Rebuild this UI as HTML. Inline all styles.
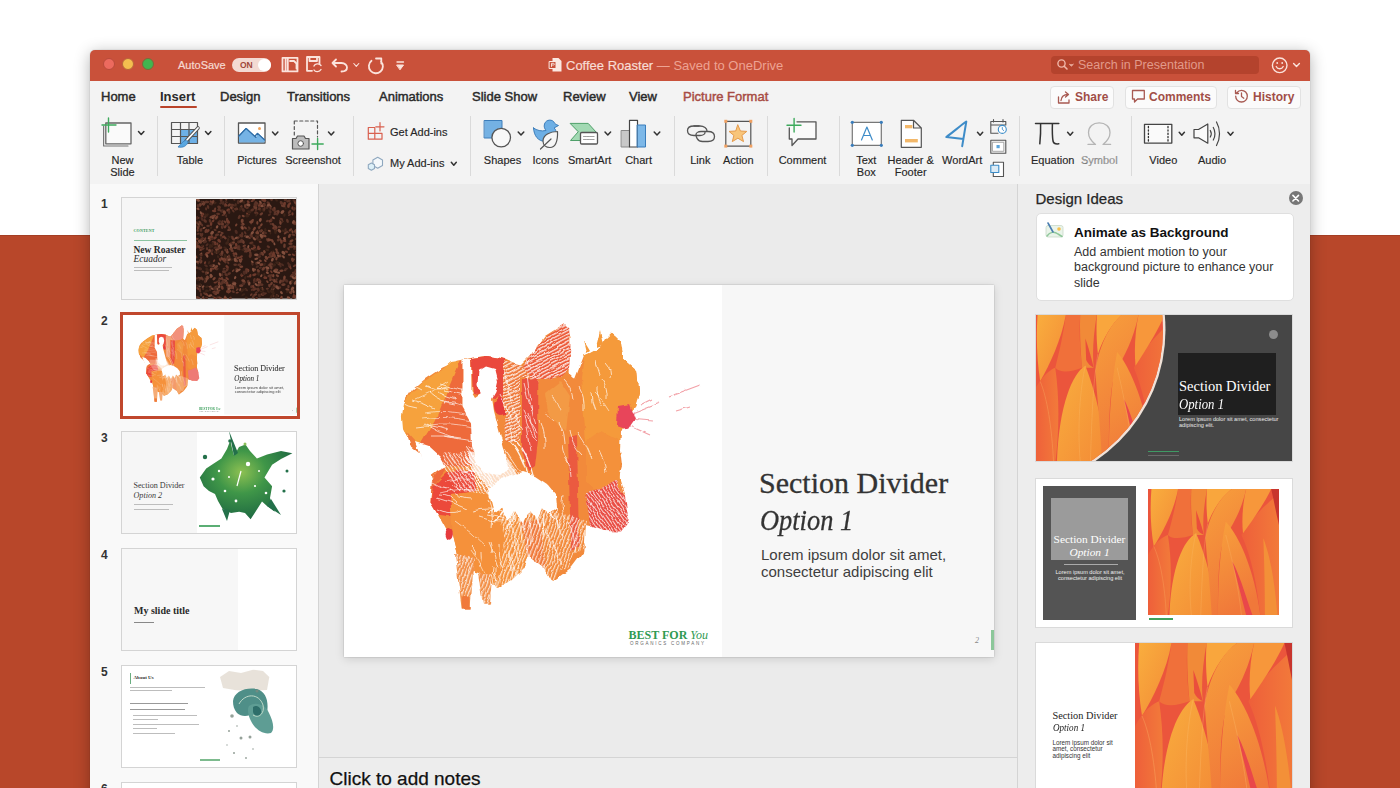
<!DOCTYPE html>
<html><head><meta charset="utf-8">
<style>
*{margin:0;padding:0;box-sizing:border-box}
html,body{width:1400px;height:788px;overflow:hidden;background:#fff;font-family:"Liberation Sans",sans-serif;position:relative}
.a{position:absolute}
.t{position:absolute;white-space:nowrap;line-height:1}
.lbl{position:absolute;font-size:11px;line-height:12px;color:#262626;-webkit-text-stroke:.15px #262626;text-align:center;white-space:nowrap;width:80px}
.tab{position:absolute;top:89.5px;font-size:13px;line-height:1;color:#2a2a2a;white-space:nowrap;-webkit-text-stroke:.45px #2a2a2a}
.sep{position:absolute;top:116px;width:1px;height:60px;background:#DADADA}
.thumb{position:absolute;left:121px;width:176px;height:103px;background:#fff;border:1px solid #D4D4D4;overflow:hidden}
.num{position:absolute;left:101px;font-size:12px;font-weight:bold;color:#333;line-height:1}
.chev{position:absolute;width:6px;height:6px}
svg{position:absolute;overflow:visible}
</style></head>
<body>
<div class="a" style="left:0;top:235.3px;width:1400px;height:553px;background:#B8472A;border-top:1.2px solid #A43E24"></div>
<!-- window -->
<div class="a" style="left:90px;top:50px;width:1220px;height:760px;background:#F3F3F3;border-radius:5px 5px 0 0;box-shadow:0 3px 16px rgba(0,0,0,.30),0 0 1px rgba(0,0,0,.35)"></div>
<!-- title bar -->
<div class="a" style="left:90px;top:50px;width:1220px;height:31px;background:#C9513A;border-radius:5px 5px 0 0"></div>
<div class="a" style="left:102.5px;top:58.3px;width:12px;height:12px;border-radius:50%;background:#EC6A5E;border:1px solid #B84A3A"></div>
<div class="a" style="left:122.1px;top:58.3px;width:12px;height:12px;border-radius:50%;background:#F4BE4F;border:1px solid #B8663A"></div>
<div class="a" style="left:141.7px;top:58.3px;width:12px;height:12px;border-radius:50%;background:#42B54F;border:1px solid #7A6A3A"></div>
<div class="t" style="left:178px;top:59.8px;font-size:11px;color:#F6D9D1;-webkit-text-stroke:.2px #F6D9D1">AutoSave</div>
<div class="a" style="left:232px;top:58.4px;width:39px;height:13.5px;border-radius:7px;background:#F3DAD3"></div>
<div class="t" style="left:240px;top:61.4px;font-size:8.5px;font-weight:bold;color:#A0473A">ON</div>
<div class="a" style="left:258px;top:58.9px;width:12.5px;height:12.5px;border-radius:50%;background:#fff"></div>
<div class="t" style="left:566px;top:59.4px;font-size:13px;color:#F8DDD5;-webkit-text-stroke:.2px #F8DDD5">Coffee Roaster <span style="color:#EDA393;-webkit-text-stroke:0">— Saved to OneDrive</span></div>
<div class="a" style="left:1051px;top:56px;width:208px;height:18px;border-radius:4px;background:#B4432D"></div>
<div class="t" style="left:1078px;top:59px;font-size:12.5px;color:#E29A8A">Search in Presentation</div>

<!-- tabs -->
<div class="tab" style="left:101px">Home</div>
<div class="tab" style="left:160px;font-weight:bold;-webkit-text-stroke:0">Insert</div>
<div class="a" style="left:160px;top:105.5px;width:37px;height:2.5px;border-radius:1.5px;background:#B9432A"></div>
<div class="tab" style="left:220px">Design</div>
<div class="tab" style="left:287px">Transitions</div>
<div class="tab" style="left:379px">Animations</div>
<div class="tab" style="left:472px">Slide Show</div>
<div class="tab" style="left:563px">Review</div>
<div class="tab" style="left:629px">View</div>
<div class="tab" style="left:683px;color:#A84C44;-webkit-text-stroke:.45px #A84C44">Picture Format</div>

<!-- share buttons -->
<div class="a" style="left:1049.5px;top:85.5px;width:64px;height:23px;border-radius:4px;background:#FBFBFB;border:1px solid #E2E2E2"></div>
<div class="a" style="left:1124.5px;top:85.5px;width:92px;height:23px;border-radius:4px;background:#FBFBFB;border:1px solid #E2E2E2"></div>
<div class="a" style="left:1227px;top:85.5px;width:74px;height:23px;border-radius:4px;background:#FBFBFB;border:1px solid #E2E2E2"></div>
<div class="t" style="left:1075px;top:90.5px;font-size:12px;font-weight:bold;color:#A14E47">Share</div>
<div class="t" style="left:1149px;top:90.5px;font-size:12px;font-weight:bold;color:#A14E47">Comments</div>
<div class="t" style="left:1253px;top:90.5px;font-size:12px;font-weight:bold;color:#A14E47">History</div>

<!-- ribbon separators -->
<div class="sep" style="left:157px"></div>
<div class="sep" style="left:224px"></div>
<div class="sep" style="left:353px"></div>
<div class="sep" style="left:470px"></div>
<div class="sep" style="left:673.5px"></div>
<div class="sep" style="left:767px"></div>
<div class="sep" style="left:839px"></div>
<div class="sep" style="left:1019px"></div>
<div class="sep" style="left:1130.5px"></div>

<!-- ribbon labels -->
<div class="lbl" style="left:82.5px;top:153.7px">New<br>Slide</div>
<div class="lbl" style="left:150px;top:153.7px">Table</div>
<div class="lbl" style="left:217px;top:153.7px">Pictures</div>
<div class="lbl" style="left:273px;top:153.7px">Screenshot</div>
<div class="t" style="left:390px;top:126.5px;font-size:11px;color:#262626;-webkit-text-stroke:.15px #262626">Get Add-ins</div>
<div class="t" style="left:390px;top:158.2px;font-size:11px;color:#262626;-webkit-text-stroke:.15px #262626">My Add-ins</div>
<div class="lbl" style="left:462.5px;top:153.7px">Shapes</div>
<div class="lbl" style="left:505.6px;top:153.7px">Icons</div>
<div class="lbl" style="left:549.7px;top:153.7px">SmartArt</div>
<div class="lbl" style="left:598.6px;top:153.7px">Chart</div>
<div class="lbl" style="left:660.3px;top:153.7px">Link</div>
<div class="lbl" style="left:698.3px;top:153.7px">Action</div>
<div class="lbl" style="left:762.5px;top:153.7px">Comment</div>
<div class="lbl" style="left:826.3px;top:153.7px">Text<br>Box</div>
<div class="lbl" style="left:870.7px;top:153.7px">Header &amp;<br>Footer</div>
<div class="lbl" style="left:922.2px;top:153.7px">WordArt</div>
<div class="lbl" style="left:1012.7px;top:153.7px">Equation</div>
<div class="lbl" style="left:1059.3px;top:153.7px;color:#A8A8A8">Symbol</div>
<div class="lbl" style="left:1123.3px;top:153.7px">Video</div>
<div class="lbl" style="left:1172px;top:153.7px">Audio</div>


<!-- ribbon bottom border -->
<div class="a" style="left:90px;top:183.5px;width:1220px;height:1.5px;background:#D6D6D6"></div>

<!-- slide pane -->
<div class="a" style="left:90px;top:184px;width:228px;height:604px;background:#F9F9F9"></div>
<div class="a" style="left:317.6px;top:184px;width:1.3px;height:604px;background:#D4D4D4"></div>
<!-- main area -->
<div class="a" style="left:319px;top:184px;width:698px;height:604px;background:#EBEBEB"></div>
<div class="a" style="left:319px;top:757px;width:698px;height:1px;background:#D4D4D4"></div>
<div class="a" style="left:319px;top:758px;width:698px;height:30px;background:#EDEDED"></div>
<div class="t" style="left:329.5px;top:768.7px;font-size:19px;color:#111;-webkit-text-stroke:.25px #111">Click to add notes</div>
<!-- design pane -->
<div class="a" style="left:1017px;top:184px;width:1px;height:604px;background:#D4D4D4"></div>
<div class="a" style="left:1018px;top:184px;width:292px;height:604px;background:#EDEDED"></div>
<div class="t" style="left:1035.5px;top:190.9px;font-size:15px;color:#262626;-webkit-text-stroke:.25px #262626">Design Ideas</div>
<div class="a" style="left:1288.7px;top:191.2px;width:14px;height:14px;border-radius:50%;background:#777"></div>
<div class="a" style="left:1035.5px;top:212.5px;width:258px;height:88px;border-radius:5px;background:#fff;border:1px solid #DFDFDF"></div>
<div class="t" style="left:1074px;top:226px;font-size:13.5px;font-weight:bold;color:#111">Animate as Background</div>
<div class="a" style="left:1074px;top:244.5px;font-size:12.5px;line-height:15.8px;color:#333;width:215px">Add ambient motion to your<br>background picture to enhance your<br>slide</div>

<!-- main slide -->
<div class="a" style="left:344px;top:284.5px;width:650px;height:372px;box-shadow:0 2px 9px rgba(0,0,0,.13),0 0 1.5px rgba(0,0,0,.25);overflow:hidden"><div class="a" style="left:0;top:0;width:650px;height:372px;background:#fff"></div>
<div class="a" style="left:378px;top:0;width:272px;height:372px;background:#F7F7F7"></div>
<svg style="left:0;top:0" width="650" height="372" viewBox="344 284 650 372"><defs><filter id="rough" x="-5%" y="-5%" width="110%" height="110%"><feTurbulence type="fractalNoise" baseFrequency=".09" numOctaves="2" seed="3"/><feDisplacementMap in="SourceGraphic" scale="5" xChannelSelector="R" yChannelSelector="G"/></filter>
<pattern id="hA" width="3.2" height="3.2" patternUnits="userSpaceOnUse" patternTransform="rotate(62)"><rect width="1.3" height="3.2" fill="#fff" fill-opacity=".8"/></pattern>
<pattern id="hB" width="3" height="3" patternUnits="userSpaceOnUse" patternTransform="rotate(-35)"><rect width="1.1" height="3" fill="#fff" fill-opacity=".75"/></pattern>
<pattern id="hC" width="3.4" height="3.4" patternUnits="userSpaceOnUse" patternTransform="rotate(20)"><rect width="1.2" height="3.4" fill="#fff" fill-opacity=".7"/></pattern>
</defs><g filter="url(#rough)">
<path fill="#F28A3B" d="M402.6 414 L405 400 412 389 425 378 434 372 442.6 366.4 457.8 359.7 471 357 485 355 501.5 357 520 365 530 355 545 335 564.7 322.6 570.5 336 568.6 372 575 378 583.8 355 597.1 349.3 605 340 612.3 332.1 620 339.7 623.8 358.8 637.1 370.2 639 391.1 635.2 406.4 628 415 621 430 620 448.3 622 465 618.9 475.9 625.1 496.9 621 522 604.2 528.3 585.4 524.1 583.3 551.3 570.7 568 553 581 545.3 568.2 528.8 555.5 523.8 567 511 579.6 497.1 586 493.3 581 481.9 573.3 474.3 570.8 457.8 553 452.7 532.7 447.2 530.4 438 513.7 430.5 501 432 480 440.7 465 440.7 452 423.5 446.3 410.2 440.6 403.6 429.2Z"/>
<path fill="#EE6B3B" d="M406 430 L425 440 441 455 445 470 433 485 430.5 501 432 480 440.7 465 440.7 452 423.5 446.3 410.2 440.6Z"/>
<!-- A light lobe -->
<path fill="#F6A23D" d="M401.9 415.5 L404 402 409 396 413.3 389.6 417 387 420.9 382 428 378 434.6 372.9 443 368 451.3 360.7 460.5 359.9 L448 390 438 415 425.5 435 419.8 445.2 410 440 403 428Z"/>
<!-- B red-orange -->
<path fill="#EE6A3B" d="M460.5 359.9 L462.5 360 462.5 406 471 421.6 474 435 472 466 441.1 465 439.6 457.4 419.8 445.2 425.5 435 438 415 448 390Z"/>
<path fill="#F07C3B" d="M406 430 L419.8 445.2 439.6 457.4 441.1 465 433 478 430 470 420 452 410 444Z"/>
<!-- C red patch head -->
<path fill="#EA4A3C" d="M471 357 L488 355 505 358 507 395 495 397 484 394 473 392Z"/>
<ellipse cx="500" cy="405" rx="6" ry="9" fill="#E63A3E"/>
<!-- E striped area -->
<path fill="#EF7A3C" d="M504 360 L523.3 365.3 532.4 379 520 376 520 440 505 440 504 410Z"/>
<path fill="url(#hA)" d="M504 360 L523.3 365.3 532.4 379 520 376 520 440 505 440 504 410Z"/>
<!-- F tall feather -->
<path fill="#EC5C3B" d="M523.3 365.3 L535 348 547.6 334.8 564.4 322.6 569 327.2 570.5 345.5 569 368.3 558.3 379 543.1 388.1 532.4 379Z"/>
<path fill="url(#hA)" d="M523.3 365.3 L535 348 547.6 334.8 564.4 322.6 569 327.2 570.5 345.5 569 368.3 558.3 379 543.1 388.1 532.4 379Z"/>
<!-- G red column -->
<path fill="#EA5140" d="M522 378 L538.5 379 538.5 435 535 465 528 470 522 450Z"/>
<!-- H center orange -->
<path fill="#F28A3A" d="M538.5 379 L560 376 581 378 584 400 586 440 586 520 584.7 548 574.5 551.7 568.2 568.2 560.6 568.2 553 581 545.3 568.2 540 520 538.5 470Z"/>
<path fill="#F39A45" d="M545 392 L560 380 570 395 566 430 555 420 548 410Z"/>
<!-- K red under -->
<path fill="#EB5A40" d="M568 436 L577 434 579 546 571 550Z"/>
<!-- I right blob -->
<path fill="#F59A3B" d="M581 378 L584.2 354.6 590 352 596.4 348.5 601 345 605 338 611.6 331.8 615 334 620.7 339.4 623.8 358.8 630 364 637.1 370.2 639 391.1 635.2 406.4 628 415 620 430 619.6 470 619.6 490 600 492 586 480 586 440Z"/>
<path fill="#F4913A" d="M586 440 L600 430 619.6 440 619.6 490 600 492 586 480Z"/>
<!-- J red lower hatched -->
<path fill="#E8483F" d="M586 491 L600 488 616 480 625 496 628.8 520 621 530.5 604 530 590 525Z"/>
<path fill="url(#hB)" d="M586 491 L600 488 616 480 625 496 628.8 520 621 530.5 604 530 590 525Z"/>
<path fill="#fff" d="M416 441 L428 445 440 456 446 466 438 470 430 476 426 466 420 452Z"/>
<!-- L red lobe -->
<path fill="#EC4A3A" d="M430.5 501.6 L433 485 445.7 472.6 460 468 473 470 476 495 470 510 450 515.3 438 513.7Z"/>
<!-- N bottom orange -->
<path fill="#F5913A" d="M450 494 L475 490 506.6 494 520 520 528.8 555.5 523.8 567 511 579.6 497.1 586 493.3 581 481.9 573.3 474.3 570.8 457.8 553 452.7 532.7Z"/>
<path fill="#F07A3B" d="M520 520 L540 520 545.3 568.2 528.8 555.5Z"/>
<!-- legs stippled -->
<path fill="#F29048" d="M455 553 L474 556 470.5 607.6 461.6 607.6Z"/><path fill="url(#hC)" d="M455 553 L474 556 471 596 461 596Z"/>
<path fill="#F07A3B" d="M462 596 L470 596 470.5 607.6 462 607.6Z"/>
<path fill="#F29048" d="M478 573 L492 573 490 603.8 483 603.8Z"/><path fill="url(#hC)" d="M478 573 L492 573 490 603.8 483 603.8Z"/>
<ellipse cx="449.2" cy="533.3" rx="3.6" ry="5.4" fill="#E63A3E"/>
<!-- white hatch over bottom strands -->
<path fill="url(#hC)" d="M497 500 L540 505 586 520 584.7 548 574.5 551.7 568.2 568.2 560.6 568.2 553 581 545.3 568.2 528.8 555.5 523.8 567 511 579.6 497.1 586 505 540Z"/>
<path fill="url(#hB)" d="M442.6 451.3 L494 451 494 494 460 490 445 470Z"/>
<!-- GEN --><defs><clipPath id="spc"><path d="M402.6 414 L405 400 412 389 425 378 434 372 442.6 366.4 457.8 359.7 471 357 485 355 501.5 357 520 365 530 355 545 335 564.7 322.6 570.5 336 568.6 372 575 378 583.8 355 597.1 349.3 605 340 612.3 332.1 620 339.7 623.8 358.8 637.1 370.2 639 391.1 635.2 406.4 628 415 621 430 620 448.3 622 465 618.9 475.9 625.1 496.9 621 522 604.2 528.3 585.4 524.1 583.3 551.3 570.7 568 553 581 545.3 568.2 528.8 555.5 523.8 567 511 579.6 497.1 586 493.3 581 481.9 573.3 474.3 570.8 457.8 553 452.7 532.7 447.2 530.4 438 513.7 430.5 501 432 480 440.7 465 440.7 452 423.5 446.3 410.2 440.6 403.6 429.2Z"/></clipPath></defs><g clip-path="url(#spc)" fill="none" stroke="#fff" stroke-width=".9" stroke-opacity=".75"><path d="M424 423Q438 432 454 436"/><path d="M440 383Q455 388 471 391"/><path d="M444 389Q454 392 465 394"/><path d="M426 384Q436 390 448 387"/><path d="M438 391Q447 396 456 398"/><path d="M402 381Q413 383 422 389"/><path d="M443 435Q459 438 475 440"/><path d="M429 391Q440 401 455 403"/><path d="M444 401Q455 399 464 405"/><path d="M400 400Q408 405 417 406"/><path d="M412 399Q424 402 435 408"/><path d="M415 426Q432 423 448 429"/><path d="M431 435Q446 434 461 437"/><path d="M426 385Q436 390 447 386"/><path d="M437 497Q452 501 467 508"/><path d="M452 484Q461 489 471 490"/><path d="M472 510Q488 506 504 510"/><path d="M450 489Q459 497 471 497"/><path d="M462 471Q473 468 483 473"/><path d="M439 494Q451 494 458 502"/><path d="M489 486Q499 488 510 489"/><path d="M480 481Q489 486 499 483"/><path d="M432 481Q441 487 451 488"/><path d="M488 491Q497 494 506 497"/><path d="M437 508Q449 514 461 510"/><path d="M479 516Q491 521 504 520"/><path d="M459 469Q469 469 479 472"/><path d="M487 514Q500 516 512 520"/><path d="M505 371Q509 385 511 400"/><path d="M529 411Q530 424 536 436"/><path d="M513 407Q515 419 523 429"/><path d="M527 374Q528 387 531 400"/><path d="M500 394Q506 406 511 418"/><path d="M531 403Q532 414 536 424"/><path d="M525 414Q527 429 537 440"/><path d="M527 426Q529 438 531 450"/><path d="M509 416Q509 428 513 439"/><path d="M524 408Q529 420 537 432"/><path d="M524 383Q527 397 532 410"/><path d="M525 357Q529 368 536 377"/><path d="M509 550Q510 560 511 570"/><path d="M506 498Q513 508 514 521"/><path d="M505 495Q506 508 510 520"/><path d="M543 514Q544 524 543 534"/><path d="M510 522Q516 537 520 553"/><path d="M489 541Q495 554 498 567"/><path d="M542 569Q539 582 543 595"/><path d="M543 521Q547 535 552 548"/><path d="M575 570Q572 583 578 595"/><path d="M488 499Q494 513 492 528"/><path d="M544 564Q549 576 550 589"/><path d="M512 566Q512 584 520 600"/><path d="M544 512Q544 526 543 539"/><path d="M517 572Q519 584 521 595"/><path d="M499 543Q498 555 503 566"/><path d="M563 494Q560 507 566 518"/><path d="M557 514Q556 526 563 535"/><path d="M514 539Q515 554 519 568"/><path d="M556 502Q557 514 558 526"/><path d="M518 516Q522 529 522 542"/><path d="M553 541Q557 552 561 563"/><path d="M571 566Q570 576 574 586"/><path d="M527 536Q529 551 530 566"/><path d="M568 520Q575 535 576 552"/><path d="M511 556Q515 572 522 587"/><path d="M528 511Q533 528 530 545"/><path d="M559 421Q565 431 565 443"/><path d="M562 444Q563 455 571 464"/><path d="M569 428Q571 444 582 454"/><path d="M578 431Q587 443 592 458"/><path d="M567 456Q571 466 571 476"/><path d="M579 386Q585 397 584 410"/><path d="M563 378Q572 387 573 399"/><path d="M540 419Q546 433 545 449"/><path d="M597 385Q596 396 603 405"/><path d="M596 358Q597 366 600 374"/><path d="M599 449Q605 459 606 471"/><path d="M602 378Q608 387 607 398"/><path d="M591 392Q591 401 595 409"/><path d="M606 362Q612 368 610 377"/><path d="M482 551Q483 558 481 566"/><path d="M491 541Q494 547 491 552"/><path d="M497 577Q493 583 499 588"/><path d="M483 582Q486 590 487 598"/><path d="M465 556Q467 563 466 570"/><path d="M461 582Q462 591 461 600"/><path d="M493 565Q491 574 494 581"/><path d="M471 544Q477 549 475 556"/><path d="M495 566Q495 571 495 577"/><path d="M494 572Q499 579 496 587"/></g><!-- /GEN -->
<!-- dancer -->
<path fill="#fff" d="M462.5 359 L471 358 471.5 390 475 396 481 392 477.5 383 478.5 370 486 365.5 495 368 498 380 495.5 391 492 397 494 410 498 425 502 440 506 455 508 468 500 474 486 472 476 462 472 445 471 421.6 462.5 406Z"/>
<path fill="url(#hB)" d="M465.5 445 L506 448 520 470 520 491 495 494 475 485 465 465Z"/>
<path fill="#fff" fill-opacity=".7" d="M468 450 L508 458 518 476 512 488 490 486 472 470Z"/>
<!-- tutu feathers -->
<path fill="#fff" d="M488 488 L498 479 510 474 522 471 535 475 547 483 556 494 557 506 549 512 542 506 538 519 530 510 523 523 515 510 507 519 503 506 494 513 491 501Z"/>
<g fill="none" stroke="#fff" stroke-width="1.3" stroke-opacity=".9">
<path d="M512 500 L495 520 M518 502 L508 528 M524 503 L524 530 M530 502 L540 526 M536 500 L556 518 M508 498 L488 512"/>
<path d="M510 440 C520 450 528 470 530 490 M514 438 C526 450 534 470 536 492"/>
</g>
<!-- feather strands on left lobe -->
<g fill="none" stroke="#fff" stroke-opacity=".55" stroke-width="1">
<path d="M425 412 Q445 408 470 414 M422 418 Q445 414 472 420 M430 424 Q450 421 472 426 M415 398 Q432 392 448 380"/>
<path d="M445 480 Q462 476 480 480 M440 492 Q460 486 480 490 M455 520 Q470 530 485 545 M470 548 Q480 560 486 575"/>
<path d="M560 410 Q556 400 552 395 M555 420 Q550 415 545 412 M595 392 Q605 400 610 410"/>
</g>
<!-- splatter -->
<g stroke="#E9606A" stroke-width="1.1" stroke-opacity=".6">
<path d="M632 413 L660 402 M630 418 L652 420 M628 424 L650 434 M668 396 L700 384 M640 404 L652 398 M676 410 L690 406"/>
</g>
<path fill="#E8455A" d="M618 406 L630 404 635 418 628 428 617 424Z"/>
<path fill="#F59A3B" d="M596 346 L600 330 603 344Z M587 352 L584 340 590 350Z"/>
</g></svg>
<div class="t" style="left:415px;top:183.2px;font-family:'Liberation Serif',serif;font-size:30px;color:#333;-webkit-text-stroke:.3px #333">Section Divider</div>
<div class="t" style="left:416px;top:220.8px;font-family:'Liberation Serif',serif;font-style:italic;font-size:30px;color:#333;-webkit-text-stroke:.3px #333;transform:scaleX(.88);transform-origin:0 0">Option 1</div>
<div class="a" style="left:417px;top:262.9px;font-size:15px;line-height:16.7px;color:#3e3e3e;white-space:nowrap">Lorem ipsum dolor sit amet,<br>consectetur adipiscing elit</div>
<div class="t" style="left:284.5px;top:344px;font-family:'Liberation Serif',serif;font-size:12px;font-weight:bold;color:#2F9A52">BEST FOR <i style="font-weight:normal">You</i></div>
<div class="t" style="left:286px;top:357.5px;font-size:4.5px;letter-spacing:1.75px;color:#666">ORGANICS COMPANY</div>
<div class="t" style="left:631px;top:352px;font-family:'Liberation Serif',serif;font-style:italic;font-size:8px;color:#888">2</div>
<div class="a" style="left:646.7px;top:345.5px;width:2.9px;height:19.8px;background:#8CC79A"></div>
</div>
<!-- thumbnails -->
<div class="num" style="top:198px">1</div>
<div class="thumb" style="top:197px;background:#F6F6F6">
  <div class="a" style="left:11.5px;top:30px;font-family:'Liberation Serif',serif;font-size:4px;font-weight:bold;color:#3C9A5C;letter-spacing:.2px">CONTENT</div>
  <div class="a" style="left:11.5px;top:41.5px;width:53px;height:1px;background:#8CC4A0"></div>
  <div class="t" style="left:11.5px;top:47.5px;font-family:'Liberation Serif',serif;font-size:9.5px;font-weight:bold;color:#2a2a2a">New Roaster</div>
  <div class="t" style="left:11.5px;top:57.3px;font-family:'Liberation Serif',serif;font-size:9.5px;font-style:italic;color:#2a2a2a">Ecuador</div>
  <div class="a" style="left:11.5px;top:68.5px;width:38px;height:1.2px;background:#BDBDBD"></div>
  <div class="a" style="left:11.5px;top:72px;width:35px;height:1.2px;background:#BDBDBD"></div>
  <svg style="left:74.3px;top:1.2px;overflow:hidden" width="100.5" height="99.6" viewBox="0 0 100 100" preserveAspectRatio="none"><rect width="100" height="100" fill="#2A1812"/><ellipse cx="21" cy="53" rx="2.2" ry="1.4" transform="rotate(122 21 53)" fill="#744232"/><ellipse cx="60" cy="65" rx="1.8" ry="1.1" transform="rotate(60 60 65)" fill="#4E2C22"/><ellipse cx="1" cy="47" rx="2.2" ry="1.2" transform="rotate(59 1 47)" fill="#744232"/><ellipse cx="88" cy="5" rx="2.2" ry="1.5" transform="rotate(104 88 5)" fill="#6E3A2C"/><ellipse cx="4" cy="42" rx="2.2" ry="1.4" transform="rotate(166 4 42)" fill="#83503E"/><ellipse cx="2" cy="19" rx="1.6" ry="0.9" transform="rotate(5 2 19)" fill="#6E3A2C"/><ellipse cx="20" cy="70" rx="2" ry="1.2" transform="rotate(38 20 70)" fill="#6A3C2E"/><ellipse cx="85" cy="4" rx="2.2" ry="1.5" transform="rotate(60 85 4)" fill="#5C3428"/><ellipse cx="99" cy="25" rx="1.8" ry="1.2" transform="rotate(168 99 25)" fill="#5C3428"/><ellipse cx="15" cy="71" rx="2.2" ry="1.4" transform="rotate(99 15 71)" fill="#744232"/><ellipse cx="43" cy="18" rx="2.2" ry="1.3" transform="rotate(115 43 18)" fill="#5A3226"/><ellipse cx="40" cy="62" rx="2.2" ry="1.3" transform="rotate(23 40 62)" fill="#6A3C2E"/><ellipse cx="91" cy="91" rx="2.2" ry="1.2" transform="rotate(17 91 91)" fill="#744232"/><ellipse cx="73" cy="77" rx="2" ry="1.3" transform="rotate(159 73 77)" fill="#5C3428"/><ellipse cx="23" cy="85" rx="1.8" ry="1.2" transform="rotate(85 23 85)" fill="#83503E"/><ellipse cx="97" cy="76" rx="2" ry="1.2" transform="rotate(43 97 76)" fill="#5C3428"/><ellipse cx="22" cy="99" rx="2.2" ry="1.3" transform="rotate(174 22 99)" fill="#4E2C22"/><ellipse cx="86" cy="66" rx="1.8" ry="1.1" transform="rotate(41 86 66)" fill="#4E2C22"/><ellipse cx="44" cy="62" rx="2.2" ry="1.4" transform="rotate(62 44 62)" fill="#6A3C2E"/><ellipse cx="71" cy="8" rx="2.2" ry="1.5" transform="rotate(123 71 8)" fill="#4E2C22"/><ellipse cx="36" cy="6" rx="2" ry="1.3" transform="rotate(8 36 6)" fill="#5A3226"/><ellipse cx="31" cy="21" rx="2.2" ry="1.2" transform="rotate(86 31 21)" fill="#6A3C2E"/><ellipse cx="19" cy="95" rx="2.2" ry="1.2" transform="rotate(35 19 95)" fill="#6E3A2C"/><ellipse cx="3" cy="27" rx="2" ry="1.3" transform="rotate(94 3 27)" fill="#5A3226"/><ellipse cx="62" cy="74" rx="2.2" ry="1.3" transform="rotate(136 62 74)" fill="#3E2419"/><ellipse cx="17" cy="98" rx="1.6" ry="1.0" transform="rotate(32 17 98)" fill="#4E2C22"/><ellipse cx="33" cy="75" rx="2" ry="1.3" transform="rotate(149 33 75)" fill="#5A3226"/><ellipse cx="32" cy="87" rx="2.2" ry="1.5" transform="rotate(35 32 87)" fill="#6A3C2E"/><ellipse cx="18" cy="12" rx="2.2" ry="1.2" transform="rotate(6 18 12)" fill="#6E3A2C"/><ellipse cx="100" cy="18" rx="1.6" ry="1.1" transform="rotate(167 100 18)" fill="#3E2419"/><ellipse cx="16" cy="38" rx="2" ry="1.2" transform="rotate(56 16 38)" fill="#6A3C2E"/><ellipse cx="23" cy="23" rx="2.2" ry="1.3" transform="rotate(140 23 23)" fill="#4E2C22"/><ellipse cx="77" cy="90" rx="1.6" ry="1.1" transform="rotate(2 77 90)" fill="#5A3226"/><ellipse cx="59" cy="8" rx="2.2" ry="1.5" transform="rotate(44 59 8)" fill="#744232"/><ellipse cx="32" cy="89" rx="2" ry="1.3" transform="rotate(62 32 89)" fill="#5A3226"/><ellipse cx="19" cy="39" rx="2" ry="1.3" transform="rotate(140 19 39)" fill="#6E3A2C"/><ellipse cx="73" cy="12" rx="1.6" ry="1.0" transform="rotate(82 73 12)" fill="#3E2419"/><ellipse cx="37" cy="89" rx="1.8" ry="1.0" transform="rotate(83 37 89)" fill="#744232"/><ellipse cx="45" cy="8" rx="2" ry="1.3" transform="rotate(107 45 8)" fill="#5C3428"/><ellipse cx="9" cy="83" rx="1.6" ry="1.0" transform="rotate(114 9 83)" fill="#4E2C22"/><ellipse cx="87" cy="82" rx="2.2" ry="1.4" transform="rotate(131 87 82)" fill="#5A3226"/><ellipse cx="51" cy="9" rx="1.8" ry="1.0" transform="rotate(169 51 9)" fill="#5A3226"/><ellipse cx="5" cy="31" rx="2" ry="1.3" transform="rotate(103 5 31)" fill="#5A3226"/><ellipse cx="58" cy="30" rx="2.2" ry="1.3" transform="rotate(124 58 30)" fill="#744232"/><ellipse cx="80" cy="83" rx="1.6" ry="0.9" transform="rotate(44 80 83)" fill="#6E3A2C"/><ellipse cx="47" cy="91" rx="1.8" ry="1.2" transform="rotate(160 47 91)" fill="#3E2419"/><ellipse cx="31" cy="61" rx="2.2" ry="1.3" transform="rotate(157 31 61)" fill="#5A3226"/><ellipse cx="67" cy="91" rx="1.6" ry="0.9" transform="rotate(51 67 91)" fill="#3E2419"/><ellipse cx="50" cy="91" rx="1.8" ry="1.0" transform="rotate(44 50 91)" fill="#5C3428"/><ellipse cx="66" cy="38" rx="2.2" ry="1.5" transform="rotate(118 66 38)" fill="#5C3428"/><ellipse cx="21" cy="90" rx="2.2" ry="1.3" transform="rotate(85 21 90)" fill="#83503E"/><ellipse cx="82" cy="74" rx="1.8" ry="1.1" transform="rotate(7 82 74)" fill="#83503E"/><ellipse cx="65" cy="32" rx="1.8" ry="1.2" transform="rotate(129 65 32)" fill="#744232"/><ellipse cx="30" cy="76" rx="2" ry="1.3" transform="rotate(40 30 76)" fill="#5A3226"/><ellipse cx="59" cy="51" rx="2.2" ry="1.4" transform="rotate(170 59 51)" fill="#3E2419"/><ellipse cx="85" cy="22" rx="2.2" ry="1.4" transform="rotate(25 85 22)" fill="#744232"/><ellipse cx="27" cy="4" rx="2" ry="1.3" transform="rotate(94 27 4)" fill="#4E2C22"/><ellipse cx="9" cy="64" rx="1.6" ry="1.0" transform="rotate(112 9 64)" fill="#6E3A2C"/><ellipse cx="30" cy="0" rx="1.8" ry="1.0" transform="rotate(79 30 0)" fill="#744232"/><ellipse cx="58" cy="47" rx="1.6" ry="1.0" transform="rotate(34 58 47)" fill="#5A3226"/><ellipse cx="67" cy="6" rx="2" ry="1.2" transform="rotate(103 67 6)" fill="#744232"/><ellipse cx="28" cy="73" rx="2.2" ry="1.5" transform="rotate(4 28 73)" fill="#5C3428"/><ellipse cx="10" cy="55" rx="1.8" ry="1.0" transform="rotate(127 10 55)" fill="#6E3A2C"/><ellipse cx="60" cy="86" rx="2" ry="1.1" transform="rotate(39 60 86)" fill="#83503E"/><ellipse cx="36" cy="38" rx="1.6" ry="1.1" transform="rotate(18 36 38)" fill="#5C3428"/><ellipse cx="23" cy="65" rx="1.6" ry="1.0" transform="rotate(48 23 65)" fill="#83503E"/><ellipse cx="34" cy="45" rx="1.6" ry="0.9" transform="rotate(149 34 45)" fill="#6E3A2C"/><ellipse cx="35" cy="87" rx="2.2" ry="1.3" transform="rotate(26 35 87)" fill="#744232"/><ellipse cx="45" cy="68" rx="2" ry="1.2" transform="rotate(176 45 68)" fill="#744232"/><ellipse cx="93" cy="67" rx="2.2" ry="1.2" transform="rotate(56 93 67)" fill="#744232"/><ellipse cx="64" cy="5" rx="2" ry="1.3" transform="rotate(162 64 5)" fill="#6A3C2E"/><ellipse cx="2" cy="90" rx="2" ry="1.2" transform="rotate(41 2 90)" fill="#6E3A2C"/><ellipse cx="2" cy="35" rx="1.6" ry="0.9" transform="rotate(165 2 35)" fill="#5C3428"/><ellipse cx="39" cy="49" rx="1.8" ry="1.2" transform="rotate(178 39 49)" fill="#83503E"/><ellipse cx="1" cy="45" rx="1.8" ry="1.2" transform="rotate(155 1 45)" fill="#4E2C22"/><ellipse cx="96" cy="48" rx="1.8" ry="1.0" transform="rotate(137 96 48)" fill="#5A3226"/><ellipse cx="26" cy="28" rx="2" ry="1.3" transform="rotate(92 26 28)" fill="#5C3428"/><ellipse cx="30" cy="51" rx="1.8" ry="1.1" transform="rotate(171 30 51)" fill="#83503E"/><ellipse cx="73" cy="16" rx="1.6" ry="1.1" transform="rotate(148 73 16)" fill="#4E2C22"/><ellipse cx="85" cy="94" rx="1.8" ry="1.2" transform="rotate(54 85 94)" fill="#83503E"/><ellipse cx="65" cy="37" rx="1.6" ry="0.9" transform="rotate(169 65 37)" fill="#5A3226"/><ellipse cx="78" cy="82" rx="2.2" ry="1.5" transform="rotate(48 78 82)" fill="#744232"/><ellipse cx="32" cy="23" rx="2.2" ry="1.5" transform="rotate(56 32 23)" fill="#6E3A2C"/><ellipse cx="61" cy="33" rx="1.6" ry="1.0" transform="rotate(117 61 33)" fill="#744232"/><ellipse cx="4" cy="43" rx="2.2" ry="1.5" transform="rotate(35 4 43)" fill="#744232"/><ellipse cx="20" cy="48" rx="1.8" ry="1.1" transform="rotate(0 20 48)" fill="#3E2419"/><ellipse cx="73" cy="58" rx="1.8" ry="1.1" transform="rotate(141 73 58)" fill="#6E3A2C"/><ellipse cx="86" cy="7" rx="1.6" ry="1.0" transform="rotate(33 86 7)" fill="#6E3A2C"/><ellipse cx="42" cy="59" rx="2" ry="1.2" transform="rotate(160 42 59)" fill="#6E3A2C"/><ellipse cx="76" cy="91" rx="1.6" ry="1.1" transform="rotate(26 76 91)" fill="#83503E"/><ellipse cx="83" cy="32" rx="2.2" ry="1.5" transform="rotate(50 83 32)" fill="#83503E"/><ellipse cx="9" cy="95" rx="2" ry="1.2" transform="rotate(33 9 95)" fill="#6A3C2E"/><ellipse cx="96" cy="33" rx="1.6" ry="1.0" transform="rotate(75 96 33)" fill="#744232"/><ellipse cx="65" cy="26" rx="1.8" ry="1.1" transform="rotate(126 65 26)" fill="#744232"/><ellipse cx="4" cy="87" rx="2" ry="1.4" transform="rotate(133 4 87)" fill="#83503E"/><ellipse cx="1" cy="24" rx="1.8" ry="1.1" transform="rotate(67 1 24)" fill="#5A3226"/><ellipse cx="7" cy="15" rx="1.6" ry="1.1" transform="rotate(59 7 15)" fill="#6E3A2C"/><ellipse cx="62" cy="64" rx="2" ry="1.2" transform="rotate(5 62 64)" fill="#83503E"/><ellipse cx="18" cy="44" rx="2.2" ry="1.5" transform="rotate(162 18 44)" fill="#6E3A2C"/><ellipse cx="92" cy="65" rx="1.8" ry="1.1" transform="rotate(59 92 65)" fill="#4E2C22"/><ellipse cx="82" cy="58" rx="1.8" ry="1.2" transform="rotate(149 82 58)" fill="#5C3428"/><ellipse cx="44" cy="62" rx="1.8" ry="1.0" transform="rotate(69 44 62)" fill="#83503E"/><ellipse cx="88" cy="42" rx="2" ry="1.2" transform="rotate(12 88 42)" fill="#6E3A2C"/><ellipse cx="23" cy="25" rx="1.8" ry="1.0" transform="rotate(40 23 25)" fill="#6A3C2E"/><ellipse cx="28" cy="70" rx="1.6" ry="0.9" transform="rotate(164 28 70)" fill="#5C3428"/><ellipse cx="80" cy="51" rx="1.6" ry="1.1" transform="rotate(52 80 51)" fill="#744232"/><ellipse cx="68" cy="2" rx="1.6" ry="1.1" transform="rotate(56 68 2)" fill="#5C3428"/><ellipse cx="31" cy="26" rx="2.2" ry="1.4" transform="rotate(133 31 26)" fill="#4E2C22"/><ellipse cx="51" cy="38" rx="2" ry="1.3" transform="rotate(175 51 38)" fill="#83503E"/><ellipse cx="100" cy="53" rx="1.6" ry="1.0" transform="rotate(11 100 53)" fill="#5A3226"/><ellipse cx="98" cy="74" rx="2.2" ry="1.3" transform="rotate(163 98 74)" fill="#5C3428"/><ellipse cx="99" cy="32" rx="2.2" ry="1.4" transform="rotate(135 99 32)" fill="#6A3C2E"/><ellipse cx="37" cy="43" rx="2" ry="1.3" transform="rotate(167 37 43)" fill="#3E2419"/><ellipse cx="49" cy="37" rx="1.6" ry="0.9" transform="rotate(149 49 37)" fill="#5C3428"/><ellipse cx="62" cy="41" rx="1.8" ry="1.2" transform="rotate(38 62 41)" fill="#3E2419"/><ellipse cx="39" cy="49" rx="1.6" ry="0.9" transform="rotate(173 39 49)" fill="#6E3A2C"/><ellipse cx="29" cy="6" rx="2" ry="1.3" transform="rotate(108 29 6)" fill="#5C3428"/><ellipse cx="80" cy="60" rx="1.8" ry="1.1" transform="rotate(93 80 60)" fill="#744232"/><ellipse cx="5" cy="63" rx="2" ry="1.3" transform="rotate(111 5 63)" fill="#6A3C2E"/><ellipse cx="98" cy="2" rx="2.2" ry="1.4" transform="rotate(41 98 2)" fill="#4E2C22"/><ellipse cx="27" cy="27" rx="1.8" ry="1.2" transform="rotate(86 27 27)" fill="#4E2C22"/><ellipse cx="85" cy="99" rx="1.8" ry="1.2" transform="rotate(115 85 99)" fill="#744232"/><ellipse cx="94" cy="45" rx="2.2" ry="1.3" transform="rotate(179 94 45)" fill="#6A3C2E"/><ellipse cx="88" cy="47" rx="2.2" ry="1.3" transform="rotate(94 88 47)" fill="#6A3C2E"/><ellipse cx="36" cy="86" rx="1.6" ry="1.1" transform="rotate(62 36 86)" fill="#3E2419"/><ellipse cx="41" cy="71" rx="2.2" ry="1.5" transform="rotate(42 41 71)" fill="#5A3226"/><ellipse cx="3" cy="80" rx="2" ry="1.4" transform="rotate(54 3 80)" fill="#744232"/><ellipse cx="15" cy="3" rx="1.8" ry="1.2" transform="rotate(48 15 3)" fill="#6E3A2C"/><ellipse cx="83" cy="89" rx="1.8" ry="1.3" transform="rotate(167 83 89)" fill="#5A3226"/><ellipse cx="48" cy="84" rx="2" ry="1.3" transform="rotate(132 48 84)" fill="#5A3226"/><ellipse cx="6" cy="17" rx="1.6" ry="1.1" transform="rotate(42 6 17)" fill="#6E3A2C"/><ellipse cx="14" cy="97" rx="2.2" ry="1.2" transform="rotate(162 14 97)" fill="#83503E"/><ellipse cx="14" cy="22" rx="2" ry="1.3" transform="rotate(74 14 22)" fill="#5A3226"/><ellipse cx="98" cy="50" rx="1.6" ry="0.9" transform="rotate(1 98 50)" fill="#5A3226"/><ellipse cx="32" cy="59" rx="2" ry="1.4" transform="rotate(67 32 59)" fill="#83503E"/><ellipse cx="17" cy="67" rx="2" ry="1.3" transform="rotate(161 17 67)" fill="#83503E"/><ellipse cx="26" cy="80" rx="1.8" ry="1.2" transform="rotate(71 26 80)" fill="#6A3C2E"/><ellipse cx="0" cy="43" rx="1.6" ry="0.9" transform="rotate(88 0 43)" fill="#744232"/><ellipse cx="64" cy="3" rx="1.6" ry="1.1" transform="rotate(44 64 3)" fill="#83503E"/><ellipse cx="73" cy="87" rx="1.8" ry="1.2" transform="rotate(82 73 87)" fill="#6A3C2E"/><ellipse cx="77" cy="97" rx="1.8" ry="1.0" transform="rotate(78 77 97)" fill="#5A3226"/><ellipse cx="32" cy="41" rx="1.8" ry="1.2" transform="rotate(98 32 41)" fill="#3E2419"/><ellipse cx="95" cy="93" rx="1.6" ry="0.9" transform="rotate(82 95 93)" fill="#744232"/><ellipse cx="38" cy="55" rx="1.8" ry="1.3" transform="rotate(21 38 55)" fill="#6E3A2C"/><ellipse cx="58" cy="91" rx="1.8" ry="1.0" transform="rotate(157 58 91)" fill="#6E3A2C"/><ellipse cx="6" cy="48" rx="2.2" ry="1.2" transform="rotate(142 6 48)" fill="#6E3A2C"/><ellipse cx="21" cy="70" rx="1.6" ry="1.0" transform="rotate(2 21 70)" fill="#4E2C22"/><ellipse cx="39" cy="66" rx="1.8" ry="1.2" transform="rotate(0 39 66)" fill="#5C3428"/><ellipse cx="56" cy="11" rx="2.2" ry="1.3" transform="rotate(155 56 11)" fill="#5A3226"/><ellipse cx="100" cy="56" rx="2.2" ry="1.5" transform="rotate(47 100 56)" fill="#3E2419"/><ellipse cx="81" cy="97" rx="1.8" ry="1.1" transform="rotate(36 81 97)" fill="#6A3C2E"/><ellipse cx="52" cy="83" rx="2" ry="1.3" transform="rotate(90 52 83)" fill="#5A3226"/><ellipse cx="68" cy="95" rx="1.6" ry="1.0" transform="rotate(130 68 95)" fill="#4E2C22"/><ellipse cx="10" cy="82" rx="1.8" ry="1.2" transform="rotate(117 10 82)" fill="#83503E"/><ellipse cx="60" cy="37" rx="1.8" ry="1.2" transform="rotate(121 60 37)" fill="#3E2419"/><ellipse cx="98" cy="24" rx="2" ry="1.2" transform="rotate(150 98 24)" fill="#6E3A2C"/><ellipse cx="68" cy="53" rx="1.8" ry="1.2" transform="rotate(67 68 53)" fill="#744232"/><ellipse cx="85" cy="22" rx="1.8" ry="1.0" transform="rotate(47 85 22)" fill="#3E2419"/><ellipse cx="96" cy="61" rx="2.2" ry="1.4" transform="rotate(69 96 61)" fill="#744232"/><ellipse cx="64" cy="32" rx="1.6" ry="1.1" transform="rotate(164 64 32)" fill="#5C3428"/><ellipse cx="37" cy="72" rx="1.6" ry="0.9" transform="rotate(137 37 72)" fill="#6A3C2E"/><ellipse cx="89" cy="1" rx="1.8" ry="1.2" transform="rotate(178 89 1)" fill="#5A3226"/><ellipse cx="87" cy="86" rx="2.2" ry="1.3" transform="rotate(177 87 86)" fill="#6A3C2E"/><ellipse cx="55" cy="24" rx="1.6" ry="1.1" transform="rotate(96 55 24)" fill="#5A3226"/><ellipse cx="25" cy="85" rx="2" ry="1.4" transform="rotate(161 25 85)" fill="#5A3226"/><ellipse cx="62" cy="36" rx="1.8" ry="1.0" transform="rotate(92 62 36)" fill="#3E2419"/><ellipse cx="47" cy="43" rx="2.2" ry="1.4" transform="rotate(67 47 43)" fill="#6A3C2E"/><ellipse cx="29" cy="23" rx="1.6" ry="1.0" transform="rotate(57 29 23)" fill="#6A3C2E"/><ellipse cx="98" cy="74" rx="1.8" ry="1.1" transform="rotate(134 98 74)" fill="#5C3428"/><ellipse cx="4" cy="6" rx="2.2" ry="1.5" transform="rotate(145 4 6)" fill="#6A3C2E"/><ellipse cx="21" cy="50" rx="2.2" ry="1.5" transform="rotate(118 21 50)" fill="#4E2C22"/><ellipse cx="21" cy="18" rx="1.8" ry="1.2" transform="rotate(97 21 18)" fill="#6E3A2C"/><ellipse cx="21" cy="51" rx="2.2" ry="1.3" transform="rotate(172 21 51)" fill="#744232"/><ellipse cx="82" cy="65" rx="1.8" ry="1.0" transform="rotate(86 82 65)" fill="#4E2C22"/><ellipse cx="14" cy="48" rx="2" ry="1.3" transform="rotate(122 14 48)" fill="#3E2419"/><ellipse cx="10" cy="93" rx="2.2" ry="1.2" transform="rotate(134 10 93)" fill="#3E2419"/><ellipse cx="18" cy="45" rx="2.2" ry="1.2" transform="rotate(25 18 45)" fill="#6E3A2C"/><ellipse cx="50" cy="52" rx="2.2" ry="1.5" transform="rotate(72 50 52)" fill="#4E2C22"/><ellipse cx="52" cy="31" rx="1.6" ry="1.1" transform="rotate(147 52 31)" fill="#3E2419"/><ellipse cx="30" cy="60" rx="2" ry="1.2" transform="rotate(143 30 60)" fill="#5A3226"/><ellipse cx="29" cy="99" rx="2.2" ry="1.3" transform="rotate(87 29 99)" fill="#744232"/><ellipse cx="40" cy="46" rx="2" ry="1.3" transform="rotate(72 40 46)" fill="#6E3A2C"/><ellipse cx="3" cy="80" rx="1.6" ry="1.1" transform="rotate(17 3 80)" fill="#5C3428"/><ellipse cx="63" cy="83" rx="2.2" ry="1.3" transform="rotate(108 63 83)" fill="#83503E"/><ellipse cx="49" cy="29" rx="2" ry="1.1" transform="rotate(35 49 29)" fill="#6A3C2E"/><ellipse cx="69" cy="95" rx="1.6" ry="0.9" transform="rotate(160 69 95)" fill="#5A3226"/><ellipse cx="67" cy="70" rx="2.2" ry="1.4" transform="rotate(132 67 70)" fill="#6A3C2E"/><ellipse cx="11" cy="79" rx="2.2" ry="1.5" transform="rotate(126 11 79)" fill="#744232"/><ellipse cx="53" cy="29" rx="1.8" ry="1.1" transform="rotate(52 53 29)" fill="#4E2C22"/><ellipse cx="21" cy="83" rx="1.8" ry="1.0" transform="rotate(153 21 83)" fill="#5A3226"/><ellipse cx="76" cy="89" rx="1.8" ry="1.1" transform="rotate(102 76 89)" fill="#3E2419"/><ellipse cx="11" cy="74" rx="2" ry="1.4" transform="rotate(9 11 74)" fill="#744232"/><ellipse cx="62" cy="49" rx="2.2" ry="1.3" transform="rotate(95 62 49)" fill="#6E3A2C"/><ellipse cx="95" cy="83" rx="2" ry="1.1" transform="rotate(138 95 83)" fill="#6A3C2E"/><ellipse cx="4" cy="62" rx="2.2" ry="1.3" transform="rotate(118 4 62)" fill="#5C3428"/><ellipse cx="74" cy="34" rx="1.6" ry="0.9" transform="rotate(81 74 34)" fill="#3E2419"/><ellipse cx="23" cy="92" rx="1.6" ry="0.9" transform="rotate(152 23 92)" fill="#6A3C2E"/><ellipse cx="72" cy="4" rx="2" ry="1.3" transform="rotate(41 72 4)" fill="#5A3226"/><ellipse cx="78" cy="66" rx="1.8" ry="1.2" transform="rotate(21 78 66)" fill="#3E2419"/><ellipse cx="55" cy="88" rx="1.6" ry="1.1" transform="rotate(88 55 88)" fill="#5A3226"/><ellipse cx="60" cy="60" rx="2" ry="1.1" transform="rotate(162 60 60)" fill="#83503E"/><ellipse cx="31" cy="68" rx="2" ry="1.2" transform="rotate(40 31 68)" fill="#6E3A2C"/><ellipse cx="90" cy="82" rx="2.2" ry="1.5" transform="rotate(42 90 82)" fill="#4E2C22"/><ellipse cx="67" cy="1" rx="2.2" ry="1.5" transform="rotate(18 67 1)" fill="#6A3C2E"/><ellipse cx="23" cy="33" rx="1.6" ry="0.9" transform="rotate(168 23 33)" fill="#744232"/><ellipse cx="61" cy="81" rx="1.8" ry="1.0" transform="rotate(93 61 81)" fill="#6E3A2C"/><ellipse cx="40" cy="6" rx="1.8" ry="1.0" transform="rotate(89 40 6)" fill="#3E2419"/><ellipse cx="53" cy="85" rx="2" ry="1.2" transform="rotate(98 53 85)" fill="#83503E"/><ellipse cx="26" cy="76" rx="1.8" ry="1.2" transform="rotate(87 26 76)" fill="#4E2C22"/><ellipse cx="100" cy="34" rx="1.8" ry="1.1" transform="rotate(162 100 34)" fill="#5A3226"/><ellipse cx="28" cy="82" rx="2" ry="1.2" transform="rotate(141 28 82)" fill="#4E2C22"/><ellipse cx="95" cy="77" rx="1.6" ry="1.0" transform="rotate(117 95 77)" fill="#6A3C2E"/><ellipse cx="63" cy="86" rx="2.2" ry="1.4" transform="rotate(134 63 86)" fill="#6A3C2E"/><ellipse cx="66" cy="55" rx="2.2" ry="1.4" transform="rotate(58 66 55)" fill="#6A3C2E"/><ellipse cx="67" cy="66" rx="1.6" ry="1.0" transform="rotate(30 67 66)" fill="#5A3226"/><ellipse cx="40" cy="33" rx="2.2" ry="1.5" transform="rotate(72 40 33)" fill="#4E2C22"/><ellipse cx="33" cy="31" rx="2" ry="1.2" transform="rotate(172 33 31)" fill="#6A3C2E"/><ellipse cx="8" cy="42" rx="2" ry="1.2" transform="rotate(162 8 42)" fill="#83503E"/><ellipse cx="56" cy="22" rx="2.2" ry="1.3" transform="rotate(123 56 22)" fill="#744232"/><ellipse cx="83" cy="65" rx="1.8" ry="1.3" transform="rotate(62 83 65)" fill="#6E3A2C"/><ellipse cx="78" cy="10" rx="2.2" ry="1.3" transform="rotate(90 78 10)" fill="#6A3C2E"/><ellipse cx="57" cy="98" rx="2" ry="1.3" transform="rotate(121 57 98)" fill="#5A3226"/><ellipse cx="40" cy="10" rx="1.8" ry="1.1" transform="rotate(146 40 10)" fill="#744232"/><ellipse cx="66" cy="7" rx="2" ry="1.2" transform="rotate(173 66 7)" fill="#83503E"/><ellipse cx="76" cy="81" rx="1.6" ry="0.9" transform="rotate(0 76 81)" fill="#5A3226"/><ellipse cx="38" cy="57" rx="1.6" ry="1.1" transform="rotate(43 38 57)" fill="#5C3428"/><ellipse cx="3" cy="26" rx="1.8" ry="1.2" transform="rotate(110 3 26)" fill="#5C3428"/><ellipse cx="78" cy="87" rx="2.2" ry="1.3" transform="rotate(52 78 87)" fill="#5C3428"/><ellipse cx="56" cy="2" rx="1.6" ry="1.1" transform="rotate(173 56 2)" fill="#6E3A2C"/><ellipse cx="52" cy="78" rx="1.6" ry="0.9" transform="rotate(175 52 78)" fill="#5A3226"/><ellipse cx="75" cy="25" rx="1.8" ry="1.2" transform="rotate(0 75 25)" fill="#4E2C22"/><ellipse cx="72" cy="93" rx="2" ry="1.1" transform="rotate(50 72 93)" fill="#3E2419"/><ellipse cx="99" cy="79" rx="1.6" ry="1.0" transform="rotate(105 99 79)" fill="#83503E"/><ellipse cx="92" cy="50" rx="1.6" ry="1.1" transform="rotate(66 92 50)" fill="#6E3A2C"/><ellipse cx="53" cy="39" rx="1.6" ry="1.0" transform="rotate(13 53 39)" fill="#6A3C2E"/><ellipse cx="39" cy="61" rx="2.2" ry="1.5" transform="rotate(74 39 61)" fill="#83503E"/><ellipse cx="49" cy="91" rx="1.6" ry="1.0" transform="rotate(9 49 91)" fill="#3E2419"/><ellipse cx="28" cy="61" rx="2" ry="1.3" transform="rotate(24 28 61)" fill="#83503E"/><ellipse cx="1" cy="19" rx="2" ry="1.3" transform="rotate(110 1 19)" fill="#4E2C22"/><ellipse cx="92" cy="88" rx="1.8" ry="1.2" transform="rotate(88 92 88)" fill="#5C3428"/><ellipse cx="56" cy="50" rx="1.6" ry="0.9" transform="rotate(15 56 50)" fill="#744232"/><ellipse cx="18" cy="93" rx="1.8" ry="1.0" transform="rotate(163 18 93)" fill="#6E3A2C"/><ellipse cx="65" cy="15" rx="2" ry="1.2" transform="rotate(144 65 15)" fill="#6A3C2E"/><ellipse cx="18" cy="4" rx="2" ry="1.1" transform="rotate(20 18 4)" fill="#3E2419"/><ellipse cx="47" cy="82" rx="2" ry="1.4" transform="rotate(18 47 82)" fill="#744232"/><ellipse cx="46" cy="29" rx="2.2" ry="1.5" transform="rotate(46 46 29)" fill="#6E3A2C"/><ellipse cx="36" cy="8" rx="2" ry="1.2" transform="rotate(38 36 8)" fill="#5A3226"/><ellipse cx="77" cy="53" rx="1.6" ry="1.0" transform="rotate(70 77 53)" fill="#3E2419"/><ellipse cx="24" cy="49" rx="2.2" ry="1.4" transform="rotate(167 24 49)" fill="#6A3C2E"/><ellipse cx="80" cy="29" rx="1.6" ry="1.1" transform="rotate(113 80 29)" fill="#6E3A2C"/><ellipse cx="46" cy="92" rx="2.2" ry="1.3" transform="rotate(144 46 92)" fill="#3E2419"/><ellipse cx="79" cy="15" rx="2" ry="1.2" transform="rotate(172 79 15)" fill="#5C3428"/><ellipse cx="8" cy="29" rx="1.6" ry="1.0" transform="rotate(158 8 29)" fill="#83503E"/><ellipse cx="5" cy="59" rx="1.6" ry="1.0" transform="rotate(84 5 59)" fill="#5C3428"/><ellipse cx="27" cy="38" rx="2.2" ry="1.2" transform="rotate(158 27 38)" fill="#6E3A2C"/><ellipse cx="16" cy="55" rx="1.6" ry="1.1" transform="rotate(63 16 55)" fill="#6E3A2C"/><ellipse cx="25" cy="56" rx="1.8" ry="1.1" transform="rotate(35 25 56)" fill="#744232"/><ellipse cx="17" cy="19" rx="2" ry="1.2" transform="rotate(47 17 19)" fill="#5A3226"/><ellipse cx="64" cy="62" rx="1.6" ry="1.1" transform="rotate(31 64 62)" fill="#744232"/><ellipse cx="52" cy="72" rx="1.6" ry="1.0" transform="rotate(91 52 72)" fill="#6A3C2E"/><ellipse cx="45" cy="58" rx="1.8" ry="1.2" transform="rotate(149 45 58)" fill="#6E3A2C"/><ellipse cx="22" cy="15" rx="2" ry="1.1" transform="rotate(11 22 15)" fill="#5A3226"/><ellipse cx="80" cy="1" rx="1.8" ry="1.0" transform="rotate(47 80 1)" fill="#3E2419"/><ellipse cx="89" cy="34" rx="2" ry="1.2" transform="rotate(138 89 34)" fill="#6A3C2E"/><ellipse cx="89" cy="31" rx="2" ry="1.2" transform="rotate(99 89 31)" fill="#4E2C22"/><ellipse cx="47" cy="3" rx="2.2" ry="1.4" transform="rotate(25 47 3)" fill="#3E2419"/><ellipse cx="14" cy="41" rx="2" ry="1.1" transform="rotate(131 14 41)" fill="#6E3A2C"/><ellipse cx="59" cy="90" rx="2" ry="1.2" transform="rotate(20 59 90)" fill="#5C3428"/><ellipse cx="30" cy="3" rx="1.6" ry="0.9" transform="rotate(18 30 3)" fill="#4E2C22"/><ellipse cx="62" cy="91" rx="2.2" ry="1.4" transform="rotate(78 62 91)" fill="#5A3226"/><ellipse cx="53" cy="51" rx="2.2" ry="1.4" transform="rotate(40 53 51)" fill="#6A3C2E"/><ellipse cx="79" cy="13" rx="1.8" ry="1.1" transform="rotate(151 79 13)" fill="#5C3428"/><ellipse cx="79" cy="31" rx="2.2" ry="1.3" transform="rotate(56 79 31)" fill="#5C3428"/><ellipse cx="4" cy="91" rx="1.6" ry="1.0" transform="rotate(96 4 91)" fill="#5A3226"/><ellipse cx="2" cy="31" rx="2" ry="1.3" transform="rotate(108 2 31)" fill="#6A3C2E"/><ellipse cx="19" cy="69" rx="1.6" ry="1.0" transform="rotate(159 19 69)" fill="#744232"/><ellipse cx="1" cy="69" rx="1.8" ry="1.3" transform="rotate(26 1 69)" fill="#5C3428"/><ellipse cx="62" cy="57" rx="1.6" ry="0.9" transform="rotate(127 62 57)" fill="#4E2C22"/><ellipse cx="57" cy="0" rx="2" ry="1.3" transform="rotate(29 57 0)" fill="#744232"/><ellipse cx="77" cy="95" rx="1.8" ry="1.2" transform="rotate(133 77 95)" fill="#3E2419"/><ellipse cx="38" cy="84" rx="2.2" ry="1.3" transform="rotate(17 38 84)" fill="#4E2C22"/><ellipse cx="74" cy="55" rx="2" ry="1.2" transform="rotate(155 74 55)" fill="#6E3A2C"/><ellipse cx="58" cy="71" rx="1.8" ry="1.2" transform="rotate(166 58 71)" fill="#83503E"/><ellipse cx="85" cy="43" rx="2" ry="1.3" transform="rotate(87 85 43)" fill="#6E3A2C"/><ellipse cx="5" cy="96" rx="1.8" ry="1.0" transform="rotate(85 5 96)" fill="#5C3428"/><ellipse cx="42" cy="39" rx="1.8" ry="1.1" transform="rotate(133 42 39)" fill="#5C3428"/><ellipse cx="11" cy="71" rx="2.2" ry="1.5" transform="rotate(60 11 71)" fill="#3E2419"/><ellipse cx="63" cy="58" rx="2" ry="1.3" transform="rotate(150 63 58)" fill="#4E2C22"/><ellipse cx="23" cy="11" rx="1.8" ry="1.2" transform="rotate(5 23 11)" fill="#5A3226"/><ellipse cx="23" cy="10" rx="2.2" ry="1.3" transform="rotate(109 23 10)" fill="#5A3226"/><ellipse cx="22" cy="58" rx="1.6" ry="1.1" transform="rotate(65 22 58)" fill="#3E2419"/><ellipse cx="11" cy="50" rx="1.8" ry="1.1" transform="rotate(87 11 50)" fill="#5C3428"/><ellipse cx="30" cy="6" rx="1.8" ry="1.0" transform="rotate(49 30 6)" fill="#6E3A2C"/><ellipse cx="78" cy="45" rx="1.6" ry="0.9" transform="rotate(68 78 45)" fill="#83503E"/><ellipse cx="9" cy="22" rx="2.2" ry="1.4" transform="rotate(42 9 22)" fill="#5C3428"/><ellipse cx="36" cy="52" rx="1.8" ry="1.2" transform="rotate(15 36 52)" fill="#6A3C2E"/><ellipse cx="60" cy="82" rx="1.6" ry="1.1" transform="rotate(115 60 82)" fill="#4E2C22"/><ellipse cx="17" cy="70" rx="1.6" ry="0.9" transform="rotate(14 17 70)" fill="#6E3A2C"/><ellipse cx="28" cy="13" rx="2.2" ry="1.5" transform="rotate(40 28 13)" fill="#744232"/><ellipse cx="49" cy="79" rx="1.8" ry="1.1" transform="rotate(97 49 79)" fill="#3E2419"/><ellipse cx="3" cy="7" rx="1.6" ry="1.0" transform="rotate(3 3 7)" fill="#4E2C22"/><ellipse cx="55" cy="37" rx="2.2" ry="1.4" transform="rotate(43 55 37)" fill="#5A3226"/><ellipse cx="98" cy="97" rx="1.8" ry="1.0" transform="rotate(46 98 97)" fill="#6E3A2C"/><ellipse cx="97" cy="23" rx="2" ry="1.3" transform="rotate(119 97 23)" fill="#83503E"/><ellipse cx="81" cy="15" rx="1.8" ry="1.2" transform="rotate(119 81 15)" fill="#5A3226"/><ellipse cx="86" cy="14" rx="1.6" ry="1.1" transform="rotate(56 86 14)" fill="#3E2419"/><ellipse cx="11" cy="92" rx="2" ry="1.1" transform="rotate(15 11 92)" fill="#3E2419"/><ellipse cx="98" cy="48" rx="1.6" ry="1.1" transform="rotate(20 98 48)" fill="#6A3C2E"/><ellipse cx="17" cy="44" rx="1.8" ry="1.3" transform="rotate(82 17 44)" fill="#5C3428"/><ellipse cx="74" cy="13" rx="1.8" ry="1.2" transform="rotate(95 74 13)" fill="#4E2C22"/><ellipse cx="77" cy="19" rx="1.6" ry="1.1" transform="rotate(30 77 19)" fill="#83503E"/><ellipse cx="76" cy="77" rx="2" ry="1.3" transform="rotate(31 76 77)" fill="#5A3226"/><ellipse cx="56" cy="65" rx="2" ry="1.1" transform="rotate(68 56 65)" fill="#4E2C22"/><ellipse cx="94" cy="94" rx="1.8" ry="1.2" transform="rotate(28 94 94)" fill="#6A3C2E"/><ellipse cx="23" cy="42" rx="2.2" ry="1.5" transform="rotate(48 23 42)" fill="#6E3A2C"/><ellipse cx="22" cy="46" rx="1.8" ry="1.2" transform="rotate(114 22 46)" fill="#3E2419"/><ellipse cx="48" cy="47" rx="1.8" ry="1.1" transform="rotate(158 48 47)" fill="#6A3C2E"/><ellipse cx="45" cy="76" rx="1.6" ry="1.0" transform="rotate(121 45 76)" fill="#5A3226"/><ellipse cx="76" cy="57" rx="2" ry="1.1" transform="rotate(137 76 57)" fill="#744232"/><ellipse cx="9" cy="40" rx="1.8" ry="1.0" transform="rotate(116 9 40)" fill="#6E3A2C"/><ellipse cx="83" cy="28" rx="1.8" ry="1.1" transform="rotate(179 83 28)" fill="#5C3428"/><ellipse cx="75" cy="73" rx="1.6" ry="0.9" transform="rotate(52 75 73)" fill="#6E3A2C"/><ellipse cx="20" cy="19" rx="1.8" ry="1.1" transform="rotate(99 20 19)" fill="#744232"/><ellipse cx="43" cy="50" rx="1.6" ry="1.1" transform="rotate(58 43 50)" fill="#5C3428"/><ellipse cx="95" cy="42" rx="2.2" ry="1.3" transform="rotate(151 95 42)" fill="#744232"/><ellipse cx="37" cy="93" rx="1.8" ry="1.2" transform="rotate(28 37 93)" fill="#5C3428"/><ellipse cx="73" cy="66" rx="2" ry="1.2" transform="rotate(143 73 66)" fill="#5A3226"/><ellipse cx="89" cy="9" rx="1.6" ry="1.0" transform="rotate(52 89 9)" fill="#3E2419"/><ellipse cx="91" cy="93" rx="1.8" ry="1.1" transform="rotate(147 91 93)" fill="#3E2419"/><ellipse cx="15" cy="67" rx="2" ry="1.2" transform="rotate(177 15 67)" fill="#4E2C22"/><ellipse cx="30" cy="84" rx="2" ry="1.4" transform="rotate(0 30 84)" fill="#6E3A2C"/><ellipse cx="63" cy="7" rx="1.8" ry="1.2" transform="rotate(21 63 7)" fill="#6E3A2C"/><ellipse cx="99" cy="72" rx="1.6" ry="1.0" transform="rotate(87 99 72)" fill="#5A3226"/><ellipse cx="33" cy="6" rx="2" ry="1.3" transform="rotate(140 33 6)" fill="#6A3C2E"/><ellipse cx="17" cy="22" rx="1.6" ry="1.1" transform="rotate(133 17 22)" fill="#6E3A2C"/><ellipse cx="96" cy="90" rx="2.2" ry="1.5" transform="rotate(128 96 90)" fill="#83503E"/><ellipse cx="5" cy="14" rx="1.8" ry="1.0" transform="rotate(62 5 14)" fill="#83503E"/><ellipse cx="24" cy="76" rx="2" ry="1.2" transform="rotate(73 24 76)" fill="#83503E"/><ellipse cx="21" cy="94" rx="2.2" ry="1.5" transform="rotate(179 21 94)" fill="#6A3C2E"/><ellipse cx="88" cy="39" rx="1.6" ry="1.0" transform="rotate(162 88 39)" fill="#6E3A2C"/><ellipse cx="66" cy="90" rx="1.8" ry="1.0" transform="rotate(81 66 90)" fill="#744232"/><ellipse cx="39" cy="79" rx="1.6" ry="1.1" transform="rotate(114 39 79)" fill="#83503E"/><ellipse cx="39" cy="87" rx="1.6" ry="1.1" transform="rotate(79 39 87)" fill="#5A3226"/><ellipse cx="62" cy="75" rx="2.2" ry="1.3" transform="rotate(69 62 75)" fill="#3E2419"/><ellipse cx="97" cy="61" rx="1.6" ry="1.1" transform="rotate(142 97 61)" fill="#6A3C2E"/><ellipse cx="25" cy="39" rx="1.8" ry="1.0" transform="rotate(119 25 39)" fill="#3E2419"/><ellipse cx="79" cy="28" rx="1.6" ry="1.1" transform="rotate(116 79 28)" fill="#744232"/><ellipse cx="67" cy="34" rx="1.8" ry="1.2" transform="rotate(129 67 34)" fill="#744232"/><ellipse cx="12" cy="8" rx="2" ry="1.2" transform="rotate(78 12 8)" fill="#5A3226"/><ellipse cx="52" cy="16" rx="1.8" ry="1.0" transform="rotate(153 52 16)" fill="#5C3428"/><ellipse cx="63" cy="28" rx="1.8" ry="1.2" transform="rotate(146 63 28)" fill="#5A3226"/><ellipse cx="23" cy="47" rx="1.6" ry="1.0" transform="rotate(129 23 47)" fill="#744232"/><ellipse cx="91" cy="22" rx="2.2" ry="1.3" transform="rotate(73 91 22)" fill="#5A3226"/><ellipse cx="84" cy="41" rx="1.6" ry="1.0" transform="rotate(82 84 41)" fill="#6A3C2E"/><ellipse cx="58" cy="76" rx="2.2" ry="1.3" transform="rotate(163 58 76)" fill="#6E3A2C"/><ellipse cx="34" cy="46" rx="1.8" ry="1.1" transform="rotate(38 34 46)" fill="#6A3C2E"/><ellipse cx="60" cy="14" rx="2.2" ry="1.5" transform="rotate(21 60 14)" fill="#5A3226"/><ellipse cx="81" cy="88" rx="1.6" ry="1.0" transform="rotate(51 81 88)" fill="#6E3A2C"/><ellipse cx="81" cy="12" rx="1.6" ry="0.9" transform="rotate(150 81 12)" fill="#5C3428"/><ellipse cx="82" cy="38" rx="1.6" ry="1.1" transform="rotate(90 82 38)" fill="#83503E"/><ellipse cx="40" cy="89" rx="1.6" ry="1.1" transform="rotate(26 40 89)" fill="#3E2419"/><ellipse cx="35" cy="9" rx="1.6" ry="1.0" transform="rotate(52 35 9)" fill="#744232"/><ellipse cx="64" cy="69" rx="1.6" ry="1.1" transform="rotate(165 64 69)" fill="#4E2C22"/><ellipse cx="68" cy="76" rx="1.8" ry="1.1" transform="rotate(73 68 76)" fill="#3E2419"/><ellipse cx="4" cy="24" rx="2.2" ry="1.3" transform="rotate(57 4 24)" fill="#6A3C2E"/><ellipse cx="35" cy="46" rx="2" ry="1.1" transform="rotate(135 35 46)" fill="#83503E"/><ellipse cx="46" cy="35" rx="1.8" ry="1.1" transform="rotate(72 46 35)" fill="#5A3226"/><ellipse cx="52" cy="6" rx="2.2" ry="1.5" transform="rotate(18 52 6)" fill="#83503E"/><ellipse cx="34" cy="100" rx="2.2" ry="1.4" transform="rotate(111 34 100)" fill="#5C3428"/><ellipse cx="49" cy="52" rx="2" ry="1.2" transform="rotate(113 49 52)" fill="#5A3226"/><ellipse cx="47" cy="17" rx="1.6" ry="1.1" transform="rotate(27 47 17)" fill="#744232"/><ellipse cx="14" cy="52" rx="2.2" ry="1.4" transform="rotate(29 14 52)" fill="#744232"/><ellipse cx="82" cy="89" rx="1.8" ry="1.2" transform="rotate(40 82 89)" fill="#5C3428"/><ellipse cx="43" cy="48" rx="1.8" ry="1.2" transform="rotate(70 43 48)" fill="#4E2C22"/><ellipse cx="33" cy="93" rx="2.2" ry="1.4" transform="rotate(147 33 93)" fill="#6E3A2C"/><ellipse cx="51" cy="15" rx="1.6" ry="1.0" transform="rotate(66 51 15)" fill="#6E3A2C"/><ellipse cx="11" cy="3" rx="2.2" ry="1.3" transform="rotate(10 11 3)" fill="#5A3226"/><ellipse cx="92" cy="2" rx="2.2" ry="1.4" transform="rotate(161 92 2)" fill="#5A3226"/><ellipse cx="9" cy="82" rx="1.8" ry="1.2" transform="rotate(66 9 82)" fill="#5C3428"/><ellipse cx="10" cy="32" rx="2.2" ry="1.5" transform="rotate(113 10 32)" fill="#6A3C2E"/><ellipse cx="32" cy="23" rx="1.6" ry="1.0" transform="rotate(28 32 23)" fill="#6E3A2C"/><ellipse cx="33" cy="29" rx="2" ry="1.1" transform="rotate(58 33 29)" fill="#5C3428"/><ellipse cx="15" cy="5" rx="2.2" ry="1.4" transform="rotate(5 15 5)" fill="#4E2C22"/><ellipse cx="88" cy="79" rx="2.2" ry="1.3" transform="rotate(98 88 79)" fill="#744232"/><ellipse cx="47" cy="96" rx="2" ry="1.1" transform="rotate(153 47 96)" fill="#3E2419"/><ellipse cx="54" cy="77" rx="1.8" ry="1.2" transform="rotate(100 54 77)" fill="#6E3A2C"/><ellipse cx="55" cy="96" rx="1.6" ry="0.9" transform="rotate(134 55 96)" fill="#6A3C2E"/><ellipse cx="12" cy="32" rx="2" ry="1.2" transform="rotate(126 12 32)" fill="#6E3A2C"/><ellipse cx="98" cy="67" rx="1.8" ry="1.0" transform="rotate(147 98 67)" fill="#6A3C2E"/><ellipse cx="19" cy="49" rx="1.6" ry="1.0" transform="rotate(167 19 49)" fill="#4E2C22"/><ellipse cx="28" cy="15" rx="1.8" ry="1.1" transform="rotate(130 28 15)" fill="#744232"/><ellipse cx="85" cy="72" rx="2.2" ry="1.2" transform="rotate(175 85 72)" fill="#744232"/><ellipse cx="93" cy="5" rx="2" ry="1.3" transform="rotate(131 93 5)" fill="#6E3A2C"/><ellipse cx="68" cy="6" rx="2.2" ry="1.3" transform="rotate(93 68 6)" fill="#5C3428"/><ellipse cx="69" cy="79" rx="2" ry="1.1" transform="rotate(29 69 79)" fill="#6E3A2C"/><ellipse cx="29" cy="49" rx="2" ry="1.1" transform="rotate(25 29 49)" fill="#3E2419"/><ellipse cx="29" cy="82" rx="2.2" ry="1.3" transform="rotate(29 29 82)" fill="#83503E"/><ellipse cx="98" cy="10" rx="2" ry="1.2" transform="rotate(118 98 10)" fill="#5A3226"/><ellipse cx="24" cy="80" rx="1.8" ry="1.0" transform="rotate(11 24 80)" fill="#6E3A2C"/><ellipse cx="29" cy="39" rx="1.8" ry="1.2" transform="rotate(45 29 39)" fill="#6A3C2E"/><ellipse cx="49" cy="34" rx="1.8" ry="1.0" transform="rotate(62 49 34)" fill="#5A3226"/><ellipse cx="93" cy="56" rx="1.6" ry="1.1" transform="rotate(2 93 56)" fill="#744232"/><ellipse cx="30" cy="84" rx="2" ry="1.3" transform="rotate(20 30 84)" fill="#4E2C22"/><ellipse cx="59" cy="96" rx="1.8" ry="1.1" transform="rotate(168 59 96)" fill="#6A3C2E"/><ellipse cx="51" cy="71" rx="2.2" ry="1.2" transform="rotate(18 51 71)" fill="#6E3A2C"/><ellipse cx="35" cy="49" rx="2" ry="1.1" transform="rotate(79 35 49)" fill="#83503E"/><ellipse cx="47" cy="51" rx="2" ry="1.1" transform="rotate(8 47 51)" fill="#3E2419"/><ellipse cx="56" cy="45" rx="1.8" ry="1.2" transform="rotate(23 56 45)" fill="#3E2419"/><ellipse cx="99" cy="84" rx="2.2" ry="1.4" transform="rotate(124 99 84)" fill="#83503E"/><ellipse cx="72" cy="41" rx="2" ry="1.1" transform="rotate(91 72 41)" fill="#5C3428"/><ellipse cx="17" cy="18" rx="2.2" ry="1.5" transform="rotate(135 17 18)" fill="#83503E"/><ellipse cx="61" cy="39" rx="2.2" ry="1.3" transform="rotate(120 61 39)" fill="#4E2C22"/><ellipse cx="21" cy="28" rx="1.8" ry="1.2" transform="rotate(111 21 28)" fill="#83503E"/><ellipse cx="75" cy="98" rx="2.2" ry="1.4" transform="rotate(128 75 98)" fill="#3E2419"/><ellipse cx="97" cy="36" rx="2.2" ry="1.2" transform="rotate(13 97 36)" fill="#5C3428"/><ellipse cx="64" cy="83" rx="1.6" ry="1.0" transform="rotate(95 64 83)" fill="#744232"/><ellipse cx="9" cy="43" rx="2.2" ry="1.4" transform="rotate(156 9 43)" fill="#4E2C22"/><ellipse cx="38" cy="85" rx="2.2" ry="1.5" transform="rotate(175 38 85)" fill="#83503E"/><ellipse cx="5" cy="55" rx="1.6" ry="0.9" transform="rotate(136 5 55)" fill="#83503E"/><ellipse cx="26" cy="12" rx="1.8" ry="1.2" transform="rotate(6 26 12)" fill="#83503E"/><ellipse cx="84" cy="57" rx="1.6" ry="1.1" transform="rotate(71 84 57)" fill="#6A3C2E"/><ellipse cx="16" cy="90" rx="1.8" ry="1.1" transform="rotate(28 16 90)" fill="#83503E"/><ellipse cx="97" cy="100" rx="2" ry="1.1" transform="rotate(51 97 100)" fill="#4E2C22"/><ellipse cx="15" cy="18" rx="1.8" ry="1.2" transform="rotate(149 15 18)" fill="#744232"/><ellipse cx="24" cy="99" rx="1.8" ry="1.0" transform="rotate(18 24 99)" fill="#6E3A2C"/><ellipse cx="10" cy="16" rx="2.2" ry="1.3" transform="rotate(36 10 16)" fill="#3E2419"/><ellipse cx="44" cy="10" rx="2" ry="1.4" transform="rotate(110 44 10)" fill="#3E2419"/><ellipse cx="32" cy="64" rx="1.6" ry="1.0" transform="rotate(63 32 64)" fill="#5A3226"/><ellipse cx="7" cy="90" rx="1.6" ry="1.1" transform="rotate(77 7 90)" fill="#4E2C22"/><ellipse cx="60" cy="94" rx="1.6" ry="1.0" transform="rotate(146 60 94)" fill="#5C3428"/><ellipse cx="78" cy="57" rx="2.2" ry="1.4" transform="rotate(75 78 57)" fill="#6A3C2E"/><ellipse cx="93" cy="13" rx="2.2" ry="1.2" transform="rotate(126 93 13)" fill="#5C3428"/><ellipse cx="47" cy="11" rx="2.2" ry="1.5" transform="rotate(55 47 11)" fill="#4E2C22"/><ellipse cx="81" cy="54" rx="2.2" ry="1.5" transform="rotate(43 81 54)" fill="#6A3C2E"/><ellipse cx="58" cy="83" rx="2" ry="1.2" transform="rotate(107 58 83)" fill="#4E2C22"/><ellipse cx="41" cy="72" rx="2" ry="1.4" transform="rotate(138 41 72)" fill="#83503E"/><ellipse cx="77" cy="67" rx="1.8" ry="1.1" transform="rotate(162 77 67)" fill="#3E2419"/><ellipse cx="10" cy="10" rx="1.6" ry="1.0" transform="rotate(84 10 10)" fill="#5A3226"/><ellipse cx="16" cy="39" rx="1.8" ry="1.2" transform="rotate(98 16 39)" fill="#6E3A2C"/><ellipse cx="22" cy="53" rx="2.2" ry="1.5" transform="rotate(131 22 53)" fill="#3E2419"/><ellipse cx="49" cy="7" rx="2" ry="1.3" transform="rotate(87 49 7)" fill="#6A3C2E"/><ellipse cx="7" cy="99" rx="1.6" ry="1.1" transform="rotate(112 7 99)" fill="#6A3C2E"/><ellipse cx="77" cy="77" rx="1.6" ry="1.0" transform="rotate(92 77 77)" fill="#744232"/><ellipse cx="97" cy="75" rx="1.6" ry="1.1" transform="rotate(178 97 75)" fill="#4E2C22"/><ellipse cx="1" cy="87" rx="1.8" ry="1.1" transform="rotate(12 1 87)" fill="#4E2C22"/><ellipse cx="46" cy="77" rx="1.6" ry="0.9" transform="rotate(139 46 77)" fill="#6E3A2C"/><ellipse cx="60" cy="4" rx="2.2" ry="1.5" transform="rotate(45 60 4)" fill="#5C3428"/><ellipse cx="71" cy="41" rx="2" ry="1.2" transform="rotate(59 71 41)" fill="#5C3428"/><ellipse cx="11" cy="88" rx="2" ry="1.1" transform="rotate(164 11 88)" fill="#3E2419"/><ellipse cx="93" cy="67" rx="2.2" ry="1.5" transform="rotate(80 93 67)" fill="#4E2C22"/><ellipse cx="45" cy="87" rx="2.2" ry="1.4" transform="rotate(176 45 87)" fill="#6A3C2E"/><ellipse cx="72" cy="6" rx="1.8" ry="1.2" transform="rotate(139 72 6)" fill="#83503E"/><ellipse cx="87" cy="58" rx="1.8" ry="1.1" transform="rotate(51 87 58)" fill="#83503E"/><ellipse cx="61" cy="34" rx="2" ry="1.4" transform="rotate(4 61 34)" fill="#744232"/><ellipse cx="23" cy="85" rx="1.6" ry="1.0" transform="rotate(51 23 85)" fill="#6E3A2C"/><ellipse cx="16" cy="52" rx="1.8" ry="1.2" transform="rotate(119 16 52)" fill="#4E2C22"/><ellipse cx="10" cy="100" rx="2.2" ry="1.4" transform="rotate(136 10 100)" fill="#4E2C22"/><ellipse cx="25" cy="1" rx="2" ry="1.4" transform="rotate(96 25 1)" fill="#5C3428"/><ellipse cx="58" cy="72" rx="1.6" ry="0.9" transform="rotate(157 58 72)" fill="#5A3226"/><ellipse cx="77" cy="55" rx="2.2" ry="1.4" transform="rotate(105 77 55)" fill="#6E3A2C"/><ellipse cx="58" cy="49" rx="1.8" ry="1.1" transform="rotate(162 58 49)" fill="#6E3A2C"/><ellipse cx="19" cy="53" rx="1.6" ry="1.0" transform="rotate(122 19 53)" fill="#3E2419"/><ellipse cx="9" cy="80" rx="2" ry="1.2" transform="rotate(116 9 80)" fill="#3E2419"/><ellipse cx="7" cy="88" rx="1.6" ry="1.0" transform="rotate(145 7 88)" fill="#83503E"/><ellipse cx="74" cy="22" rx="2" ry="1.4" transform="rotate(150 74 22)" fill="#6E3A2C"/><ellipse cx="68" cy="37" rx="2.2" ry="1.3" transform="rotate(14 68 37)" fill="#744232"/><ellipse cx="72" cy="48" rx="1.8" ry="1.2" transform="rotate(35 72 48)" fill="#5C3428"/><ellipse cx="21" cy="88" rx="2.2" ry="1.4" transform="rotate(167 21 88)" fill="#4E2C22"/><ellipse cx="29" cy="63" rx="1.8" ry="1.2" transform="rotate(50 29 63)" fill="#5C3428"/><ellipse cx="19" cy="10" rx="1.6" ry="1.0" transform="rotate(103 19 10)" fill="#6A3C2E"/><ellipse cx="5" cy="36" rx="2" ry="1.3" transform="rotate(64 5 36)" fill="#5C3428"/><ellipse cx="19" cy="84" rx="1.6" ry="0.9" transform="rotate(6 19 84)" fill="#6E3A2C"/><ellipse cx="40" cy="26" rx="1.6" ry="1.0" transform="rotate(121 40 26)" fill="#744232"/><ellipse cx="32" cy="93" rx="2.2" ry="1.5" transform="rotate(4 32 93)" fill="#6E3A2C"/><ellipse cx="94" cy="69" rx="1.8" ry="1.0" transform="rotate(70 94 69)" fill="#6E3A2C"/><ellipse cx="70" cy="59" rx="2" ry="1.2" transform="rotate(46 70 59)" fill="#83503E"/><ellipse cx="63" cy="97" rx="2" ry="1.4" transform="rotate(64 63 97)" fill="#4E2C22"/><ellipse cx="64" cy="11" rx="1.8" ry="1.2" transform="rotate(88 64 11)" fill="#3E2419"/><ellipse cx="31" cy="80" rx="2" ry="1.2" transform="rotate(41 31 80)" fill="#6E3A2C"/><ellipse cx="65" cy="86" rx="2.2" ry="1.3" transform="rotate(2 65 86)" fill="#5A3226"/><ellipse cx="50" cy="73" rx="2.2" ry="1.5" transform="rotate(100 50 73)" fill="#5C3428"/><ellipse cx="79" cy="73" rx="2" ry="1.2" transform="rotate(25 79 73)" fill="#83503E"/><ellipse cx="2" cy="7" rx="2" ry="1.3" transform="rotate(82 2 7)" fill="#5A3226"/><ellipse cx="94" cy="48" rx="2" ry="1.2" transform="rotate(147 94 48)" fill="#5C3428"/><ellipse cx="5" cy="79" rx="1.6" ry="0.9" transform="rotate(150 5 79)" fill="#744232"/><ellipse cx="7" cy="4" rx="2" ry="1.3" transform="rotate(89 7 4)" fill="#83503E"/><ellipse cx="61" cy="24" rx="1.8" ry="1.1" transform="rotate(93 61 24)" fill="#744232"/><ellipse cx="2" cy="26" rx="1.6" ry="1.0" transform="rotate(118 2 26)" fill="#83503E"/><ellipse cx="9" cy="18" rx="2" ry="1.2" transform="rotate(127 9 18)" fill="#4E2C22"/><ellipse cx="68" cy="1" rx="2.2" ry="1.4" transform="rotate(40 68 1)" fill="#6E3A2C"/><ellipse cx="100" cy="32" rx="2.2" ry="1.4" transform="rotate(100 100 32)" fill="#744232"/><ellipse cx="19" cy="31" rx="1.6" ry="1.1" transform="rotate(22 19 31)" fill="#5A3226"/><ellipse cx="24" cy="61" rx="1.8" ry="1.1" transform="rotate(62 24 61)" fill="#6E3A2C"/><ellipse cx="89" cy="71" rx="1.8" ry="1.2" transform="rotate(131 89 71)" fill="#5C3428"/><ellipse cx="56" cy="91" rx="1.6" ry="1.1" transform="rotate(155 56 91)" fill="#5A3226"/><ellipse cx="37" cy="40" rx="2.2" ry="1.3" transform="rotate(40 37 40)" fill="#6A3C2E"/><ellipse cx="74" cy="57" rx="2" ry="1.4" transform="rotate(101 74 57)" fill="#5A3226"/><ellipse cx="54" cy="54" rx="2" ry="1.2" transform="rotate(69 54 54)" fill="#5C3428"/><ellipse cx="29" cy="58" rx="2" ry="1.2" transform="rotate(148 29 58)" fill="#3E2419"/><ellipse cx="16" cy="40" rx="1.6" ry="1.1" transform="rotate(4 16 40)" fill="#4E2C22"/><ellipse cx="37" cy="44" rx="1.8" ry="1.2" transform="rotate(162 37 44)" fill="#744232"/><ellipse cx="51" cy="52" rx="2" ry="1.2" transform="rotate(176 51 52)" fill="#6E3A2C"/><ellipse cx="43" cy="43" rx="1.8" ry="1.2" transform="rotate(150 43 43)" fill="#5C3428"/><ellipse cx="75" cy="92" rx="2.2" ry="1.2" transform="rotate(164 75 92)" fill="#3E2419"/><ellipse cx="80" cy="88" rx="1.6" ry="1.1" transform="rotate(109 80 88)" fill="#6A3C2E"/><ellipse cx="2" cy="10" rx="1.6" ry="0.9" transform="rotate(49 2 10)" fill="#6E3A2C"/><ellipse cx="2" cy="99" rx="2.2" ry="1.3" transform="rotate(23 2 99)" fill="#6A3C2E"/><ellipse cx="17" cy="3" rx="2" ry="1.3" transform="rotate(111 17 3)" fill="#744232"/><ellipse cx="60" cy="16" rx="1.6" ry="0.9" transform="rotate(106 60 16)" fill="#3E2419"/><ellipse cx="65" cy="90" rx="1.6" ry="1.0" transform="rotate(50 65 90)" fill="#3E2419"/><ellipse cx="13" cy="64" rx="1.8" ry="1.1" transform="rotate(113 13 64)" fill="#3E2419"/><ellipse cx="29" cy="100" rx="2.2" ry="1.2" transform="rotate(170 29 100)" fill="#83503E"/><ellipse cx="97" cy="56" rx="1.8" ry="1.0" transform="rotate(31 97 56)" fill="#6E3A2C"/><ellipse cx="31" cy="53" rx="2" ry="1.4" transform="rotate(61 31 53)" fill="#744232"/><ellipse cx="19" cy="4" rx="1.6" ry="1.0" transform="rotate(159 19 4)" fill="#3E2419"/><ellipse cx="77" cy="29" rx="1.6" ry="1.0" transform="rotate(111 77 29)" fill="#6E3A2C"/><ellipse cx="85" cy="20" rx="1.8" ry="1.1" transform="rotate(22 85 20)" fill="#5C3428"/><ellipse cx="63" cy="9" rx="1.8" ry="1.2" transform="rotate(84 63 9)" fill="#4E2C22"/><ellipse cx="52" cy="3" rx="1.8" ry="1.2" transform="rotate(54 52 3)" fill="#6E3A2C"/><ellipse cx="50" cy="99" rx="1.6" ry="1.1" transform="rotate(3 50 99)" fill="#3E2419"/><ellipse cx="28" cy="61" rx="2.2" ry="1.3" transform="rotate(98 28 61)" fill="#6E3A2C"/><ellipse cx="73" cy="32" rx="1.6" ry="1.0" transform="rotate(8 73 32)" fill="#83503E"/><ellipse cx="60" cy="11" rx="1.6" ry="1.0" transform="rotate(141 60 11)" fill="#4E2C22"/><ellipse cx="71" cy="71" rx="2" ry="1.3" transform="rotate(84 71 71)" fill="#6A3C2E"/><ellipse cx="53" cy="0" rx="1.6" ry="0.9" transform="rotate(13 53 0)" fill="#5A3226"/><ellipse cx="80" cy="81" rx="1.6" ry="1.1" transform="rotate(119 80 81)" fill="#5C3428"/><ellipse cx="65" cy="66" rx="2" ry="1.4" transform="rotate(172 65 66)" fill="#744232"/><ellipse cx="75" cy="65" rx="2" ry="1.2" transform="rotate(35 75 65)" fill="#5C3428"/><ellipse cx="26" cy="34" rx="1.6" ry="1.0" transform="rotate(10 26 34)" fill="#6A3C2E"/><ellipse cx="71" cy="74" rx="1.6" ry="1.1" transform="rotate(29 71 74)" fill="#83503E"/><ellipse cx="36" cy="45" rx="1.8" ry="1.1" transform="rotate(16 36 45)" fill="#4E2C22"/><ellipse cx="10" cy="75" rx="1.6" ry="0.9" transform="rotate(84 10 75)" fill="#5A3226"/><ellipse cx="76" cy="61" rx="2" ry="1.3" transform="rotate(116 76 61)" fill="#83503E"/><ellipse cx="57" cy="88" rx="1.8" ry="1.2" transform="rotate(71 57 88)" fill="#6E3A2C"/><ellipse cx="63" cy="29" rx="1.6" ry="0.9" transform="rotate(116 63 29)" fill="#6A3C2E"/><ellipse cx="26" cy="25" rx="2" ry="1.2" transform="rotate(6 26 25)" fill="#6A3C2E"/><ellipse cx="28" cy="82" rx="2.2" ry="1.2" transform="rotate(164 28 82)" fill="#5A3226"/><ellipse cx="94" cy="84" rx="2" ry="1.4" transform="rotate(94 94 84)" fill="#83503E"/><ellipse cx="46" cy="22" rx="2.2" ry="1.5" transform="rotate(97 46 22)" fill="#744232"/><ellipse cx="69" cy="62" rx="1.6" ry="1.0" transform="rotate(45 69 62)" fill="#744232"/><ellipse cx="27" cy="16" rx="1.6" ry="0.9" transform="rotate(152 27 16)" fill="#5A3226"/><ellipse cx="6" cy="36" rx="2" ry="1.2" transform="rotate(110 6 36)" fill="#5A3226"/><ellipse cx="95" cy="77" rx="2" ry="1.2" transform="rotate(141 95 77)" fill="#5C3428"/><ellipse cx="46" cy="26" rx="1.8" ry="1.1" transform="rotate(35 46 26)" fill="#5C3428"/><ellipse cx="58" cy="40" rx="2" ry="1.2" transform="rotate(49 58 40)" fill="#83503E"/><ellipse cx="84" cy="83" rx="2.2" ry="1.4" transform="rotate(107 84 83)" fill="#6A3C2E"/><ellipse cx="23" cy="82" rx="1.8" ry="1.1" transform="rotate(72 23 82)" fill="#5A3226"/><ellipse cx="53" cy="13" rx="2.2" ry="1.5" transform="rotate(16 53 13)" fill="#3E2419"/><ellipse cx="26" cy="60" rx="2" ry="1.2" transform="rotate(39 26 60)" fill="#744232"/><ellipse cx="67" cy="11" rx="2.2" ry="1.4" transform="rotate(64 67 11)" fill="#3E2419"/><ellipse cx="1" cy="40" rx="1.8" ry="1.2" transform="rotate(5 1 40)" fill="#6E3A2C"/><ellipse cx="26" cy="12" rx="2" ry="1.3" transform="rotate(145 26 12)" fill="#4E2C22"/><ellipse cx="90" cy="70" rx="1.8" ry="1.0" transform="rotate(177 90 70)" fill="#4E2C22"/><ellipse cx="0" cy="49" rx="1.8" ry="1.0" transform="rotate(123 0 49)" fill="#6A3C2E"/><ellipse cx="71" cy="83" rx="1.6" ry="0.9" transform="rotate(53 71 83)" fill="#744232"/><ellipse cx="15" cy="47" rx="2.2" ry="1.5" transform="rotate(32 15 47)" fill="#3E2419"/><ellipse cx="19" cy="89" rx="2" ry="1.1" transform="rotate(122 19 89)" fill="#5C3428"/><ellipse cx="13" cy="39" rx="1.6" ry="1.1" transform="rotate(138 13 39)" fill="#83503E"/><ellipse cx="42" cy="43" rx="1.6" ry="1.0" transform="rotate(94 42 43)" fill="#4E2C22"/><ellipse cx="68" cy="10" rx="2" ry="1.2" transform="rotate(102 68 10)" fill="#5A3226"/><ellipse cx="43" cy="66" rx="2" ry="1.2" transform="rotate(164 43 66)" fill="#5A3226"/><ellipse cx="15" cy="25" rx="2" ry="1.3" transform="rotate(96 15 25)" fill="#6E3A2C"/><ellipse cx="31" cy="71" rx="2.2" ry="1.3" transform="rotate(120 31 71)" fill="#5A3226"/><ellipse cx="18" cy="17" rx="2" ry="1.2" transform="rotate(163 18 17)" fill="#744232"/><ellipse cx="64" cy="43" rx="1.6" ry="1.1" transform="rotate(12 64 43)" fill="#6E3A2C"/><ellipse cx="74" cy="7" rx="1.8" ry="1.0" transform="rotate(55 74 7)" fill="#83503E"/><ellipse cx="11" cy="16" rx="2" ry="1.3" transform="rotate(140 11 16)" fill="#3E2419"/><ellipse cx="71" cy="90" rx="1.6" ry="1.0" transform="rotate(177 71 90)" fill="#5C3428"/><ellipse cx="15" cy="78" rx="2" ry="1.2" transform="rotate(140 15 78)" fill="#6A3C2E"/><ellipse cx="15" cy="77" rx="2" ry="1.4" transform="rotate(63 15 77)" fill="#83503E"/><ellipse cx="66" cy="96" rx="2" ry="1.2" transform="rotate(16 66 96)" fill="#6A3C2E"/><ellipse cx="45" cy="42" rx="2.2" ry="1.5" transform="rotate(115 45 42)" fill="#5C3428"/><ellipse cx="1" cy="27" rx="1.8" ry="1.2" transform="rotate(126 1 27)" fill="#3E2419"/><ellipse cx="71" cy="51" rx="2" ry="1.2" transform="rotate(14 71 51)" fill="#3E2419"/><ellipse cx="31" cy="44" rx="2.2" ry="1.5" transform="rotate(140 31 44)" fill="#3E2419"/><ellipse cx="92" cy="7" rx="2" ry="1.4" transform="rotate(91 92 7)" fill="#6E3A2C"/><ellipse cx="60" cy="56" rx="2.2" ry="1.4" transform="rotate(1 60 56)" fill="#83503E"/><ellipse cx="76" cy="42" rx="2" ry="1.2" transform="rotate(59 76 42)" fill="#744232"/><ellipse cx="57" cy="71" rx="2" ry="1.2" transform="rotate(75 57 71)" fill="#83503E"/><ellipse cx="10" cy="3" rx="2.2" ry="1.3" transform="rotate(176 10 3)" fill="#5C3428"/><ellipse cx="55" cy="44" rx="2.2" ry="1.2" transform="rotate(161 55 44)" fill="#5A3226"/><ellipse cx="69" cy="79" rx="2" ry="1.3" transform="rotate(177 69 79)" fill="#6E3A2C"/><ellipse cx="100" cy="7" rx="2.2" ry="1.3" transform="rotate(28 100 7)" fill="#3E2419"/><ellipse cx="6" cy="3" rx="1.8" ry="1.1" transform="rotate(27 6 3)" fill="#4E2C22"/><ellipse cx="86" cy="13" rx="2.2" ry="1.5" transform="rotate(138 86 13)" fill="#83503E"/><ellipse cx="87" cy="7" rx="2.2" ry="1.3" transform="rotate(3 87 7)" fill="#6A3C2E"/><ellipse cx="96" cy="15" rx="1.6" ry="1.1" transform="rotate(95 96 15)" fill="#6E3A2C"/><ellipse cx="76" cy="93" rx="2" ry="1.4" transform="rotate(157 76 93)" fill="#3E2419"/><ellipse cx="4" cy="6" rx="1.6" ry="0.9" transform="rotate(61 4 6)" fill="#6A3C2E"/><ellipse cx="21" cy="36" rx="2.2" ry="1.3" transform="rotate(164 21 36)" fill="#5C3428"/><ellipse cx="6" cy="40" rx="2.2" ry="1.4" transform="rotate(140 6 40)" fill="#5A3226"/><ellipse cx="11" cy="96" rx="1.8" ry="1.1" transform="rotate(52 11 96)" fill="#6E3A2C"/><ellipse cx="28" cy="83" rx="2.2" ry="1.3" transform="rotate(140 28 83)" fill="#744232"/><ellipse cx="74" cy="9" rx="1.8" ry="1.0" transform="rotate(68 74 9)" fill="#5C3428"/><ellipse cx="6" cy="80" rx="2" ry="1.2" transform="rotate(44 6 80)" fill="#6A3C2E"/><ellipse cx="23" cy="8" rx="2" ry="1.4" transform="rotate(24 23 8)" fill="#5A3226"/><ellipse cx="2" cy="10" rx="1.6" ry="0.9" transform="rotate(14 2 10)" fill="#83503E"/><ellipse cx="51" cy="17" rx="2.2" ry="1.5" transform="rotate(169 51 17)" fill="#3E2419"/><ellipse cx="62" cy="72" rx="1.6" ry="0.9" transform="rotate(12 62 72)" fill="#6A3C2E"/><ellipse cx="82" cy="41" rx="1.8" ry="1.3" transform="rotate(145 82 41)" fill="#5C3428"/><ellipse cx="92" cy="99" rx="1.8" ry="1.1" transform="rotate(23 92 99)" fill="#83503E"/><ellipse cx="79" cy="33" rx="2.2" ry="1.3" transform="rotate(87 79 33)" fill="#3E2419"/><ellipse cx="56" cy="34" rx="2" ry="1.3" transform="rotate(131 56 34)" fill="#83503E"/><ellipse cx="35" cy="89" rx="2" ry="1.2" transform="rotate(142 35 89)" fill="#4E2C22"/><ellipse cx="100" cy="76" rx="2" ry="1.2" transform="rotate(74 100 76)" fill="#83503E"/><ellipse cx="96" cy="9" rx="1.8" ry="1.1" transform="rotate(98 96 9)" fill="#6E3A2C"/><ellipse cx="59" cy="6" rx="2.2" ry="1.4" transform="rotate(62 59 6)" fill="#5A3226"/><ellipse cx="97" cy="93" rx="2" ry="1.1" transform="rotate(80 97 93)" fill="#83503E"/><ellipse cx="11" cy="57" rx="2" ry="1.2" transform="rotate(73 11 57)" fill="#83503E"/><ellipse cx="59" cy="9" rx="2" ry="1.3" transform="rotate(34 59 9)" fill="#6A3C2E"/><ellipse cx="25" cy="36" rx="1.8" ry="1.2" transform="rotate(123 25 36)" fill="#6A3C2E"/><ellipse cx="6" cy="26" rx="1.6" ry="1.0" transform="rotate(60 6 26)" fill="#5C3428"/><ellipse cx="5" cy="56" rx="1.8" ry="1.2" transform="rotate(19 5 56)" fill="#5A3226"/><ellipse cx="55" cy="23" rx="2.2" ry="1.4" transform="rotate(175 55 23)" fill="#744232"/><ellipse cx="81" cy="64" rx="2.2" ry="1.4" transform="rotate(5 81 64)" fill="#3E2419"/><ellipse cx="31" cy="85" rx="2" ry="1.3" transform="rotate(86 31 85)" fill="#6E3A2C"/><ellipse cx="21" cy="45" rx="1.6" ry="0.9" transform="rotate(89 21 45)" fill="#6E3A2C"/><ellipse cx="40" cy="39" rx="1.8" ry="1.1" transform="rotate(146 40 39)" fill="#83503E"/><ellipse cx="80" cy="98" rx="2" ry="1.4" transform="rotate(145 80 98)" fill="#3E2419"/><ellipse cx="26" cy="23" rx="2" ry="1.2" transform="rotate(127 26 23)" fill="#5A3226"/><ellipse cx="100" cy="40" rx="1.8" ry="1.1" transform="rotate(162 100 40)" fill="#5A3226"/><ellipse cx="33" cy="58" rx="2.2" ry="1.2" transform="rotate(73 33 58)" fill="#5A3226"/><ellipse cx="16" cy="34" rx="2.2" ry="1.5" transform="rotate(133 16 34)" fill="#83503E"/><ellipse cx="96" cy="83" rx="1.6" ry="1.1" transform="rotate(108 96 83)" fill="#3E2419"/><ellipse cx="81" cy="77" rx="1.8" ry="1.2" transform="rotate(37 81 77)" fill="#744232"/><ellipse cx="58" cy="81" rx="1.8" ry="1.1" transform="rotate(114 58 81)" fill="#5A3226"/><ellipse cx="93" cy="16" rx="1.6" ry="1.0" transform="rotate(159 93 16)" fill="#5C3428"/><ellipse cx="93" cy="37" rx="2.2" ry="1.3" transform="rotate(110 93 37)" fill="#744232"/><ellipse cx="75" cy="21" rx="1.6" ry="1.1" transform="rotate(87 75 21)" fill="#5A3226"/><ellipse cx="7" cy="73" rx="1.6" ry="1.0" transform="rotate(20 7 73)" fill="#5C3428"/><ellipse cx="30" cy="17" rx="1.6" ry="0.9" transform="rotate(83 30 17)" fill="#4E2C22"/><ellipse cx="47" cy="25" rx="1.6" ry="1.1" transform="rotate(34 47 25)" fill="#744232"/><ellipse cx="63" cy="50" rx="1.6" ry="1.0" transform="rotate(149 63 50)" fill="#6E3A2C"/><ellipse cx="75" cy="69" rx="1.8" ry="1.2" transform="rotate(99 75 69)" fill="#6A3C2E"/><ellipse cx="56" cy="63" rx="1.6" ry="0.9" transform="rotate(38 56 63)" fill="#83503E"/><ellipse cx="87" cy="54" rx="2.2" ry="1.5" transform="rotate(39 87 54)" fill="#83503E"/><ellipse cx="33" cy="90" rx="2" ry="1.2" transform="rotate(141 33 90)" fill="#83503E"/><ellipse cx="82" cy="13" rx="1.8" ry="1.2" transform="rotate(106 82 13)" fill="#6A3C2E"/><ellipse cx="2" cy="1" rx="2.2" ry="1.4" transform="rotate(35 2 1)" fill="#83503E"/><ellipse cx="62" cy="81" rx="2" ry="1.2" transform="rotate(167 62 81)" fill="#6E3A2C"/><ellipse cx="61" cy="68" rx="1.8" ry="1.1" transform="rotate(144 61 68)" fill="#4E2C22"/><ellipse cx="69" cy="34" rx="1.8" ry="1.2" transform="rotate(22 69 34)" fill="#4E2C22"/><ellipse cx="98" cy="98" rx="2.2" ry="1.5" transform="rotate(5 98 98)" fill="#6E3A2C"/><ellipse cx="52" cy="48" rx="1.8" ry="1.0" transform="rotate(104 52 48)" fill="#83503E"/><ellipse cx="45" cy="37" rx="2.2" ry="1.5" transform="rotate(27 45 37)" fill="#5A3226"/><ellipse cx="54" cy="57" rx="2.2" ry="1.5" transform="rotate(101 54 57)" fill="#5A3226"/><ellipse cx="43" cy="71" rx="1.6" ry="1.1" transform="rotate(157 43 71)" fill="#83503E"/><ellipse cx="19" cy="100" rx="2" ry="1.3" transform="rotate(70 19 100)" fill="#6E3A2C"/><ellipse cx="68" cy="66" rx="2.2" ry="1.2" transform="rotate(113 68 66)" fill="#3E2419"/><ellipse cx="33" cy="38" rx="1.6" ry="0.9" transform="rotate(35 33 38)" fill="#3E2419"/><ellipse cx="70" cy="59" rx="2" ry="1.3" transform="rotate(59 70 59)" fill="#744232"/><ellipse cx="33" cy="87" rx="1.6" ry="0.9" transform="rotate(9 33 87)" fill="#83503E"/><ellipse cx="0" cy="80" rx="1.6" ry="1.1" transform="rotate(136 0 80)" fill="#6A3C2E"/><ellipse cx="41" cy="94" rx="1.6" ry="0.9" transform="rotate(170 41 94)" fill="#6E3A2C"/><ellipse cx="64" cy="55" rx="1.6" ry="1.0" transform="rotate(93 64 55)" fill="#4E2C22"/><ellipse cx="65" cy="37" rx="2.2" ry="1.5" transform="rotate(56 65 37)" fill="#83503E"/><ellipse cx="84" cy="67" rx="1.8" ry="1.1" transform="rotate(74 84 67)" fill="#4E2C22"/><ellipse cx="25" cy="56" rx="1.8" ry="1.0" transform="rotate(51 25 56)" fill="#4E2C22"/><ellipse cx="99" cy="4" rx="2" ry="1.2" transform="rotate(49 99 4)" fill="#744232"/><ellipse cx="68" cy="6" rx="1.6" ry="1.0" transform="rotate(9 68 6)" fill="#5A3226"/><ellipse cx="19" cy="90" rx="2.2" ry="1.3" transform="rotate(49 19 90)" fill="#4E2C22"/><ellipse cx="14" cy="88" rx="1.6" ry="1.0" transform="rotate(173 14 88)" fill="#744232"/><ellipse cx="27" cy="83" rx="2" ry="1.4" transform="rotate(163 27 83)" fill="#5A3226"/><ellipse cx="63" cy="10" rx="1.6" ry="1.1" transform="rotate(148 63 10)" fill="#5C3428"/><ellipse cx="71" cy="69" rx="2.2" ry="1.3" transform="rotate(11 71 69)" fill="#83503E"/><ellipse cx="17" cy="45" rx="2" ry="1.1" transform="rotate(65 17 45)" fill="#3E2419"/><ellipse cx="8" cy="5" rx="2" ry="1.2" transform="rotate(121 8 5)" fill="#6A3C2E"/><ellipse cx="67" cy="95" rx="2.2" ry="1.3" transform="rotate(93 67 95)" fill="#4E2C22"/><ellipse cx="63" cy="41" rx="2" ry="1.1" transform="rotate(160 63 41)" fill="#3E2419"/><ellipse cx="29" cy="57" rx="2.2" ry="1.2" transform="rotate(71 29 57)" fill="#3E2419"/><ellipse cx="35" cy="61" rx="2" ry="1.4" transform="rotate(159 35 61)" fill="#3E2419"/><ellipse cx="6" cy="47" rx="1.6" ry="0.9" transform="rotate(135 6 47)" fill="#3E2419"/><ellipse cx="42" cy="49" rx="2.2" ry="1.5" transform="rotate(98 42 49)" fill="#5A3226"/><ellipse cx="6" cy="20" rx="2.2" ry="1.2" transform="rotate(67 6 20)" fill="#4E2C22"/><ellipse cx="14" cy="38" rx="2" ry="1.1" transform="rotate(3 14 38)" fill="#6E3A2C"/><ellipse cx="45" cy="61" rx="1.8" ry="1.2" transform="rotate(128 45 61)" fill="#744232"/><ellipse cx="64" cy="21" rx="2" ry="1.4" transform="rotate(109 64 21)" fill="#83503E"/><ellipse cx="35" cy="50" rx="2.2" ry="1.3" transform="rotate(178 35 50)" fill="#6A3C2E"/><ellipse cx="51" cy="51" rx="2" ry="1.3" transform="rotate(104 51 51)" fill="#5C3428"/><ellipse cx="2" cy="81" rx="1.6" ry="1.0" transform="rotate(153 2 81)" fill="#3E2419"/><ellipse cx="87" cy="32" rx="2" ry="1.2" transform="rotate(15 87 32)" fill="#3E2419"/><ellipse cx="97" cy="74" rx="1.6" ry="0.9" transform="rotate(14 97 74)" fill="#5A3226"/><ellipse cx="36" cy="88" rx="2.2" ry="1.4" transform="rotate(100 36 88)" fill="#744232"/><ellipse cx="2" cy="64" rx="1.8" ry="1.1" transform="rotate(83 2 64)" fill="#5C3428"/><ellipse cx="69" cy="31" rx="1.8" ry="1.2" transform="rotate(73 69 31)" fill="#3E2419"/><ellipse cx="88" cy="40" rx="1.8" ry="1.1" transform="rotate(49 88 40)" fill="#83503E"/><ellipse cx="47" cy="85" rx="1.8" ry="1.0" transform="rotate(35 47 85)" fill="#4E2C22"/><ellipse cx="15" cy="29" rx="1.6" ry="1.0" transform="rotate(113 15 29)" fill="#3E2419"/><ellipse cx="63" cy="82" rx="1.6" ry="1.0" transform="rotate(0 63 82)" fill="#5C3428"/><ellipse cx="23" cy="88" rx="1.8" ry="1.0" transform="rotate(105 23 88)" fill="#83503E"/><ellipse cx="18" cy="94" rx="1.6" ry="0.9" transform="rotate(21 18 94)" fill="#5A3226"/><ellipse cx="0" cy="74" rx="1.8" ry="1.1" transform="rotate(101 0 74)" fill="#3E2419"/><ellipse cx="3" cy="48" rx="2" ry="1.4" transform="rotate(56 3 48)" fill="#6E3A2C"/><ellipse cx="88" cy="16" rx="1.8" ry="1.2" transform="rotate(101 88 16)" fill="#3E2419"/><ellipse cx="11" cy="80" rx="2" ry="1.3" transform="rotate(162 11 80)" fill="#744232"/><ellipse cx="90" cy="53" rx="1.6" ry="1.1" transform="rotate(16 90 53)" fill="#6E3A2C"/><ellipse cx="39" cy="6" rx="1.8" ry="1.0" transform="rotate(115 39 6)" fill="#4E2C22"/><ellipse cx="71" cy="22" rx="1.6" ry="1.1" transform="rotate(160 71 22)" fill="#5C3428"/><ellipse cx="74" cy="81" rx="1.6" ry="1.1" transform="rotate(117 74 81)" fill="#6A3C2E"/><ellipse cx="1" cy="45" rx="2.2" ry="1.5" transform="rotate(142 1 45)" fill="#5A3226"/><ellipse cx="75" cy="0" rx="2.2" ry="1.4" transform="rotate(73 75 0)" fill="#5A3226"/><ellipse cx="84" cy="24" rx="2" ry="1.2" transform="rotate(79 84 24)" fill="#744232"/><ellipse cx="75" cy="54" rx="1.6" ry="1.0" transform="rotate(101 75 54)" fill="#5A3226"/><ellipse cx="74" cy="79" rx="1.8" ry="1.2" transform="rotate(91 74 79)" fill="#5A3226"/><ellipse cx="40" cy="55" rx="1.6" ry="1.0" transform="rotate(62 40 55)" fill="#744232"/><ellipse cx="65" cy="77" rx="1.6" ry="1.0" transform="rotate(120 65 77)" fill="#83503E"/><ellipse cx="12" cy="27" rx="1.8" ry="1.2" transform="rotate(178 12 27)" fill="#5C3428"/><ellipse cx="94" cy="31" rx="2" ry="1.3" transform="rotate(139 94 31)" fill="#6E3A2C"/><ellipse cx="10" cy="67" rx="2" ry="1.1" transform="rotate(28 10 67)" fill="#4E2C22"/><ellipse cx="12" cy="54" rx="2" ry="1.2" transform="rotate(164 12 54)" fill="#6E3A2C"/><ellipse cx="42" cy="3" rx="2.2" ry="1.4" transform="rotate(98 42 3)" fill="#4E2C22"/><ellipse cx="40" cy="58" rx="1.6" ry="0.9" transform="rotate(125 40 58)" fill="#5C3428"/><ellipse cx="33" cy="60" rx="2.2" ry="1.4" transform="rotate(35 33 60)" fill="#5A3226"/><ellipse cx="26" cy="89" rx="2.2" ry="1.5" transform="rotate(72 26 89)" fill="#6E3A2C"/><ellipse cx="81" cy="89" rx="2.2" ry="1.4" transform="rotate(48 81 89)" fill="#83503E"/><ellipse cx="4" cy="86" rx="1.8" ry="1.2" transform="rotate(21 4 86)" fill="#3E2419"/><ellipse cx="26" cy="54" rx="2.2" ry="1.4" transform="rotate(92 26 54)" fill="#6A3C2E"/><ellipse cx="29" cy="28" rx="1.6" ry="1.1" transform="rotate(119 29 28)" fill="#6E3A2C"/><ellipse cx="79" cy="72" rx="2.2" ry="1.5" transform="rotate(172 79 72)" fill="#83503E"/><ellipse cx="0" cy="58" rx="1.8" ry="1.1" transform="rotate(56 0 58)" fill="#744232"/><ellipse cx="14" cy="91" rx="1.6" ry="0.9" transform="rotate(93 14 91)" fill="#4E2C22"/><ellipse cx="32" cy="11" rx="2" ry="1.4" transform="rotate(150 32 11)" fill="#6E3A2C"/><ellipse cx="40" cy="10" rx="2.2" ry="1.3" transform="rotate(6 40 10)" fill="#5A3226"/><ellipse cx="1" cy="63" rx="1.8" ry="1.1" transform="rotate(177 1 63)" fill="#83503E"/><ellipse cx="33" cy="61" rx="1.6" ry="1.0" transform="rotate(153 33 61)" fill="#83503E"/><ellipse cx="97" cy="79" rx="2.2" ry="1.3" transform="rotate(38 97 79)" fill="#83503E"/><ellipse cx="45" cy="2" rx="2.2" ry="1.3" transform="rotate(141 45 2)" fill="#83503E"/><ellipse cx="5" cy="51" rx="1.8" ry="1.1" transform="rotate(155 5 51)" fill="#6E3A2C"/><ellipse cx="3" cy="30" rx="1.6" ry="0.9" transform="rotate(107 3 30)" fill="#3E2419"/><ellipse cx="44" cy="91" rx="1.6" ry="0.9" transform="rotate(105 44 91)" fill="#83503E"/><ellipse cx="48" cy="74" rx="2.2" ry="1.5" transform="rotate(84 48 74)" fill="#4E2C22"/><ellipse cx="4" cy="70" rx="2.2" ry="1.5" transform="rotate(21 4 70)" fill="#4E2C22"/><ellipse cx="30" cy="51" rx="1.6" ry="1.0" transform="rotate(85 30 51)" fill="#5A3226"/><ellipse cx="25" cy="4" rx="2" ry="1.2" transform="rotate(156 25 4)" fill="#4E2C22"/><ellipse cx="73" cy="41" rx="2.2" ry="1.3" transform="rotate(4 73 41)" fill="#744232"/><ellipse cx="65" cy="93" rx="1.6" ry="0.9" transform="rotate(15 65 93)" fill="#3E2419"/><ellipse cx="41" cy="91" rx="1.6" ry="0.9" transform="rotate(141 41 91)" fill="#6A3C2E"/><ellipse cx="20" cy="68" rx="2.2" ry="1.5" transform="rotate(147 20 68)" fill="#744232"/><ellipse cx="33" cy="13" rx="2" ry="1.2" transform="rotate(88 33 13)" fill="#4E2C22"/><ellipse cx="80" cy="71" rx="2" ry="1.2" transform="rotate(10 80 71)" fill="#744232"/><ellipse cx="91" cy="33" rx="1.6" ry="1.0" transform="rotate(44 91 33)" fill="#5C3428"/><ellipse cx="2" cy="29" rx="1.8" ry="1.1" transform="rotate(86 2 29)" fill="#6E3A2C"/><ellipse cx="7" cy="50" rx="1.8" ry="1.0" transform="rotate(156 7 50)" fill="#5A3226"/><ellipse cx="46" cy="29" rx="1.6" ry="1.0" transform="rotate(84 46 29)" fill="#83503E"/><ellipse cx="35" cy="89" rx="1.8" ry="1.1" transform="rotate(18 35 89)" fill="#6A3C2E"/><ellipse cx="11" cy="46" rx="1.8" ry="1.1" transform="rotate(133 11 46)" fill="#4E2C22"/><ellipse cx="18" cy="62" rx="1.6" ry="0.9" transform="rotate(123 18 62)" fill="#6E3A2C"/><ellipse cx="62" cy="72" rx="1.8" ry="1.2" transform="rotate(55 62 72)" fill="#6A3C2E"/><ellipse cx="18" cy="80" rx="2" ry="1.2" transform="rotate(134 18 80)" fill="#744232"/><ellipse cx="37" cy="12" rx="1.8" ry="1.0" transform="rotate(54 37 12)" fill="#5A3226"/><ellipse cx="49" cy="50" rx="2.2" ry="1.5" transform="rotate(35 49 50)" fill="#5C3428"/><ellipse cx="77" cy="11" rx="2.2" ry="1.3" transform="rotate(38 77 11)" fill="#5A3226"/><ellipse cx="79" cy="28" rx="1.6" ry="1.0" transform="rotate(55 79 28)" fill="#6A3C2E"/><ellipse cx="77" cy="26" rx="2" ry="1.2" transform="rotate(55 77 26)" fill="#6A3C2E"/><ellipse cx="75" cy="85" rx="2" ry="1.2" transform="rotate(124 75 85)" fill="#6A3C2E"/><ellipse cx="74" cy="67" rx="2" ry="1.3" transform="rotate(69 74 67)" fill="#6A3C2E"/><ellipse cx="4" cy="92" rx="2" ry="1.1" transform="rotate(79 4 92)" fill="#5C3428"/><ellipse cx="82" cy="57" rx="1.6" ry="1.0" transform="rotate(29 82 57)" fill="#83503E"/><ellipse cx="38" cy="0" rx="2" ry="1.2" transform="rotate(79 38 0)" fill="#4E2C22"/><ellipse cx="60" cy="100" rx="1.8" ry="1.1" transform="rotate(124 60 100)" fill="#5A3226"/></svg>
</div>
<div class="num" style="top:315px">2</div>
<div class="a" style="left:119.5px;top:311.5px;width:180px;height:107px;border:3px solid #C0472D;background:#fff;overflow:hidden">
  <div class="a" style="left:0;top:0;width:650px;height:372px;transform:scale(.2677);transform-origin:0 0"><div class="a" style="left:0;top:0;width:650px;height:372px;background:#fff"></div>
<div class="a" style="left:378px;top:0;width:272px;height:372px;background:#F7F7F7"></div>
<svg style="left:0;top:0" width="650" height="372" viewBox="344 284 650 372"><defs><filter id="rough" x="-5%" y="-5%" width="110%" height="110%"><feTurbulence type="fractalNoise" baseFrequency=".09" numOctaves="2" seed="3"/><feDisplacementMap in="SourceGraphic" scale="5" xChannelSelector="R" yChannelSelector="G"/></filter>
<pattern id="hA" width="3.2" height="3.2" patternUnits="userSpaceOnUse" patternTransform="rotate(62)"><rect width="1.3" height="3.2" fill="#fff" fill-opacity=".8"/></pattern>
<pattern id="hB" width="3" height="3" patternUnits="userSpaceOnUse" patternTransform="rotate(-35)"><rect width="1.1" height="3" fill="#fff" fill-opacity=".75"/></pattern>
<pattern id="hC" width="3.4" height="3.4" patternUnits="userSpaceOnUse" patternTransform="rotate(20)"><rect width="1.2" height="3.4" fill="#fff" fill-opacity=".7"/></pattern>
</defs><g filter="url(#rough)">
<path fill="#F28A3B" d="M402.6 414 L405 400 412 389 425 378 434 372 442.6 366.4 457.8 359.7 471 357 485 355 501.5 357 520 365 530 355 545 335 564.7 322.6 570.5 336 568.6 372 575 378 583.8 355 597.1 349.3 605 340 612.3 332.1 620 339.7 623.8 358.8 637.1 370.2 639 391.1 635.2 406.4 628 415 621 430 620 448.3 622 465 618.9 475.9 625.1 496.9 621 522 604.2 528.3 585.4 524.1 583.3 551.3 570.7 568 553 581 545.3 568.2 528.8 555.5 523.8 567 511 579.6 497.1 586 493.3 581 481.9 573.3 474.3 570.8 457.8 553 452.7 532.7 447.2 530.4 438 513.7 430.5 501 432 480 440.7 465 440.7 452 423.5 446.3 410.2 440.6 403.6 429.2Z"/>
<path fill="#EE6B3B" d="M406 430 L425 440 441 455 445 470 433 485 430.5 501 432 480 440.7 465 440.7 452 423.5 446.3 410.2 440.6Z"/>
<!-- A light lobe -->
<path fill="#F6A23D" d="M401.9 415.5 L404 402 409 396 413.3 389.6 417 387 420.9 382 428 378 434.6 372.9 443 368 451.3 360.7 460.5 359.9 L448 390 438 415 425.5 435 419.8 445.2 410 440 403 428Z"/>
<!-- B red-orange -->
<path fill="#EE6A3B" d="M460.5 359.9 L462.5 360 462.5 406 471 421.6 474 435 472 466 441.1 465 439.6 457.4 419.8 445.2 425.5 435 438 415 448 390Z"/>
<path fill="#F07C3B" d="M406 430 L419.8 445.2 439.6 457.4 441.1 465 433 478 430 470 420 452 410 444Z"/>
<!-- C red patch head -->
<path fill="#EA4A3C" d="M471 357 L488 355 505 358 507 395 495 397 484 394 473 392Z"/>
<ellipse cx="500" cy="405" rx="6" ry="9" fill="#E63A3E"/>
<!-- E striped area -->
<path fill="#EF7A3C" d="M504 360 L523.3 365.3 532.4 379 520 376 520 440 505 440 504 410Z"/>
<path fill="url(#hA)" d="M504 360 L523.3 365.3 532.4 379 520 376 520 440 505 440 504 410Z"/>
<!-- F tall feather -->
<path fill="#EC5C3B" d="M523.3 365.3 L535 348 547.6 334.8 564.4 322.6 569 327.2 570.5 345.5 569 368.3 558.3 379 543.1 388.1 532.4 379Z"/>
<path fill="url(#hA)" d="M523.3 365.3 L535 348 547.6 334.8 564.4 322.6 569 327.2 570.5 345.5 569 368.3 558.3 379 543.1 388.1 532.4 379Z"/>
<!-- G red column -->
<path fill="#EA5140" d="M522 378 L538.5 379 538.5 435 535 465 528 470 522 450Z"/>
<!-- H center orange -->
<path fill="#F28A3A" d="M538.5 379 L560 376 581 378 584 400 586 440 586 520 584.7 548 574.5 551.7 568.2 568.2 560.6 568.2 553 581 545.3 568.2 540 520 538.5 470Z"/>
<path fill="#F39A45" d="M545 392 L560 380 570 395 566 430 555 420 548 410Z"/>
<!-- K red under -->
<path fill="#EB5A40" d="M568 436 L577 434 579 546 571 550Z"/>
<!-- I right blob -->
<path fill="#F59A3B" d="M581 378 L584.2 354.6 590 352 596.4 348.5 601 345 605 338 611.6 331.8 615 334 620.7 339.4 623.8 358.8 630 364 637.1 370.2 639 391.1 635.2 406.4 628 415 620 430 619.6 470 619.6 490 600 492 586 480 586 440Z"/>
<path fill="#F4913A" d="M586 440 L600 430 619.6 440 619.6 490 600 492 586 480Z"/>
<!-- J red lower hatched -->
<path fill="#E8483F" d="M586 491 L600 488 616 480 625 496 628.8 520 621 530.5 604 530 590 525Z"/>
<path fill="url(#hB)" d="M586 491 L600 488 616 480 625 496 628.8 520 621 530.5 604 530 590 525Z"/>
<path fill="#fff" d="M416 441 L428 445 440 456 446 466 438 470 430 476 426 466 420 452Z"/>
<!-- L red lobe -->
<path fill="#EC4A3A" d="M430.5 501.6 L433 485 445.7 472.6 460 468 473 470 476 495 470 510 450 515.3 438 513.7Z"/>
<!-- N bottom orange -->
<path fill="#F5913A" d="M450 494 L475 490 506.6 494 520 520 528.8 555.5 523.8 567 511 579.6 497.1 586 493.3 581 481.9 573.3 474.3 570.8 457.8 553 452.7 532.7Z"/>
<path fill="#F07A3B" d="M520 520 L540 520 545.3 568.2 528.8 555.5Z"/>
<!-- legs stippled -->
<path fill="#F29048" d="M455 553 L474 556 470.5 607.6 461.6 607.6Z"/><path fill="url(#hC)" d="M455 553 L474 556 471 596 461 596Z"/>
<path fill="#F07A3B" d="M462 596 L470 596 470.5 607.6 462 607.6Z"/>
<path fill="#F29048" d="M478 573 L492 573 490 603.8 483 603.8Z"/><path fill="url(#hC)" d="M478 573 L492 573 490 603.8 483 603.8Z"/>
<ellipse cx="449.2" cy="533.3" rx="3.6" ry="5.4" fill="#E63A3E"/>
<!-- white hatch over bottom strands -->
<path fill="url(#hC)" d="M497 500 L540 505 586 520 584.7 548 574.5 551.7 568.2 568.2 560.6 568.2 553 581 545.3 568.2 528.8 555.5 523.8 567 511 579.6 497.1 586 505 540Z"/>
<path fill="url(#hB)" d="M442.6 451.3 L494 451 494 494 460 490 445 470Z"/>
<!-- GEN --><defs><clipPath id="spc"><path d="M402.6 414 L405 400 412 389 425 378 434 372 442.6 366.4 457.8 359.7 471 357 485 355 501.5 357 520 365 530 355 545 335 564.7 322.6 570.5 336 568.6 372 575 378 583.8 355 597.1 349.3 605 340 612.3 332.1 620 339.7 623.8 358.8 637.1 370.2 639 391.1 635.2 406.4 628 415 621 430 620 448.3 622 465 618.9 475.9 625.1 496.9 621 522 604.2 528.3 585.4 524.1 583.3 551.3 570.7 568 553 581 545.3 568.2 528.8 555.5 523.8 567 511 579.6 497.1 586 493.3 581 481.9 573.3 474.3 570.8 457.8 553 452.7 532.7 447.2 530.4 438 513.7 430.5 501 432 480 440.7 465 440.7 452 423.5 446.3 410.2 440.6 403.6 429.2Z"/></clipPath></defs><g clip-path="url(#spc)" fill="none" stroke="#fff" stroke-width=".9" stroke-opacity=".75"><path d="M424 423Q438 432 454 436"/><path d="M440 383Q455 388 471 391"/><path d="M444 389Q454 392 465 394"/><path d="M426 384Q436 390 448 387"/><path d="M438 391Q447 396 456 398"/><path d="M402 381Q413 383 422 389"/><path d="M443 435Q459 438 475 440"/><path d="M429 391Q440 401 455 403"/><path d="M444 401Q455 399 464 405"/><path d="M400 400Q408 405 417 406"/><path d="M412 399Q424 402 435 408"/><path d="M415 426Q432 423 448 429"/><path d="M431 435Q446 434 461 437"/><path d="M426 385Q436 390 447 386"/><path d="M437 497Q452 501 467 508"/><path d="M452 484Q461 489 471 490"/><path d="M472 510Q488 506 504 510"/><path d="M450 489Q459 497 471 497"/><path d="M462 471Q473 468 483 473"/><path d="M439 494Q451 494 458 502"/><path d="M489 486Q499 488 510 489"/><path d="M480 481Q489 486 499 483"/><path d="M432 481Q441 487 451 488"/><path d="M488 491Q497 494 506 497"/><path d="M437 508Q449 514 461 510"/><path d="M479 516Q491 521 504 520"/><path d="M459 469Q469 469 479 472"/><path d="M487 514Q500 516 512 520"/><path d="M505 371Q509 385 511 400"/><path d="M529 411Q530 424 536 436"/><path d="M513 407Q515 419 523 429"/><path d="M527 374Q528 387 531 400"/><path d="M500 394Q506 406 511 418"/><path d="M531 403Q532 414 536 424"/><path d="M525 414Q527 429 537 440"/><path d="M527 426Q529 438 531 450"/><path d="M509 416Q509 428 513 439"/><path d="M524 408Q529 420 537 432"/><path d="M524 383Q527 397 532 410"/><path d="M525 357Q529 368 536 377"/><path d="M509 550Q510 560 511 570"/><path d="M506 498Q513 508 514 521"/><path d="M505 495Q506 508 510 520"/><path d="M543 514Q544 524 543 534"/><path d="M510 522Q516 537 520 553"/><path d="M489 541Q495 554 498 567"/><path d="M542 569Q539 582 543 595"/><path d="M543 521Q547 535 552 548"/><path d="M575 570Q572 583 578 595"/><path d="M488 499Q494 513 492 528"/><path d="M544 564Q549 576 550 589"/><path d="M512 566Q512 584 520 600"/><path d="M544 512Q544 526 543 539"/><path d="M517 572Q519 584 521 595"/><path d="M499 543Q498 555 503 566"/><path d="M563 494Q560 507 566 518"/><path d="M557 514Q556 526 563 535"/><path d="M514 539Q515 554 519 568"/><path d="M556 502Q557 514 558 526"/><path d="M518 516Q522 529 522 542"/><path d="M553 541Q557 552 561 563"/><path d="M571 566Q570 576 574 586"/><path d="M527 536Q529 551 530 566"/><path d="M568 520Q575 535 576 552"/><path d="M511 556Q515 572 522 587"/><path d="M528 511Q533 528 530 545"/><path d="M559 421Q565 431 565 443"/><path d="M562 444Q563 455 571 464"/><path d="M569 428Q571 444 582 454"/><path d="M578 431Q587 443 592 458"/><path d="M567 456Q571 466 571 476"/><path d="M579 386Q585 397 584 410"/><path d="M563 378Q572 387 573 399"/><path d="M540 419Q546 433 545 449"/><path d="M597 385Q596 396 603 405"/><path d="M596 358Q597 366 600 374"/><path d="M599 449Q605 459 606 471"/><path d="M602 378Q608 387 607 398"/><path d="M591 392Q591 401 595 409"/><path d="M606 362Q612 368 610 377"/><path d="M482 551Q483 558 481 566"/><path d="M491 541Q494 547 491 552"/><path d="M497 577Q493 583 499 588"/><path d="M483 582Q486 590 487 598"/><path d="M465 556Q467 563 466 570"/><path d="M461 582Q462 591 461 600"/><path d="M493 565Q491 574 494 581"/><path d="M471 544Q477 549 475 556"/><path d="M495 566Q495 571 495 577"/><path d="M494 572Q499 579 496 587"/></g><!-- /GEN -->
<!-- dancer -->
<path fill="#fff" d="M462.5 359 L471 358 471.5 390 475 396 481 392 477.5 383 478.5 370 486 365.5 495 368 498 380 495.5 391 492 397 494 410 498 425 502 440 506 455 508 468 500 474 486 472 476 462 472 445 471 421.6 462.5 406Z"/>
<path fill="url(#hB)" d="M465.5 445 L506 448 520 470 520 491 495 494 475 485 465 465Z"/>
<path fill="#fff" fill-opacity=".7" d="M468 450 L508 458 518 476 512 488 490 486 472 470Z"/>
<!-- tutu feathers -->
<path fill="#fff" d="M488 488 L498 479 510 474 522 471 535 475 547 483 556 494 557 506 549 512 542 506 538 519 530 510 523 523 515 510 507 519 503 506 494 513 491 501Z"/>
<g fill="none" stroke="#fff" stroke-width="1.3" stroke-opacity=".9">
<path d="M512 500 L495 520 M518 502 L508 528 M524 503 L524 530 M530 502 L540 526 M536 500 L556 518 M508 498 L488 512"/>
<path d="M510 440 C520 450 528 470 530 490 M514 438 C526 450 534 470 536 492"/>
</g>
<!-- feather strands on left lobe -->
<g fill="none" stroke="#fff" stroke-opacity=".55" stroke-width="1">
<path d="M425 412 Q445 408 470 414 M422 418 Q445 414 472 420 M430 424 Q450 421 472 426 M415 398 Q432 392 448 380"/>
<path d="M445 480 Q462 476 480 480 M440 492 Q460 486 480 490 M455 520 Q470 530 485 545 M470 548 Q480 560 486 575"/>
<path d="M560 410 Q556 400 552 395 M555 420 Q550 415 545 412 M595 392 Q605 400 610 410"/>
</g>
<!-- splatter -->
<g stroke="#E9606A" stroke-width="1.1" stroke-opacity=".6">
<path d="M632 413 L660 402 M630 418 L652 420 M628 424 L650 434 M668 396 L700 384 M640 404 L652 398 M676 410 L690 406"/>
</g>
<path fill="#E8455A" d="M618 406 L630 404 635 418 628 428 617 424Z"/>
<path fill="#F59A3B" d="M596 346 L600 330 603 344Z M587 352 L584 340 590 350Z"/>
</g></svg>
<div class="t" style="left:415px;top:183.2px;font-family:'Liberation Serif',serif;font-size:30px;color:#333;-webkit-text-stroke:.3px #333">Section Divider</div>
<div class="t" style="left:416px;top:220.8px;font-family:'Liberation Serif',serif;font-style:italic;font-size:30px;color:#333;-webkit-text-stroke:.3px #333;transform:scaleX(.88);transform-origin:0 0">Option 1</div>
<div class="a" style="left:417px;top:262.9px;font-size:15px;line-height:16.7px;color:#3e3e3e;white-space:nowrap">Lorem ipsum dolor sit amet,<br>consectetur adipiscing elit</div>
<div class="t" style="left:284.5px;top:344px;font-family:'Liberation Serif',serif;font-size:12px;font-weight:bold;color:#2F9A52">BEST FOR <i style="font-weight:normal">You</i></div>
<div class="t" style="left:286px;top:357.5px;font-size:4.5px;letter-spacing:1.75px;color:#666">ORGANICS COMPANY</div>
<div class="t" style="left:631px;top:352px;font-family:'Liberation Serif',serif;font-style:italic;font-size:8px;color:#888">2</div>
<div class="a" style="left:646.7px;top:345.5px;width:2.9px;height:19.8px;background:#8CC79A"></div>
</div>
</div>
<div class="num" style="top:432px">3</div>
<div class="thumb" style="top:431px">
  <div class="a" style="left:0;top:0;width:75px;height:101px;background:#F6F6F6"></div>
  <div class="t" style="left:11.5px;top:50.2px;font-family:'Liberation Serif',serif;font-size:8.1px;color:#3a3a3a">Section Divider</div>
  <div class="t" style="left:11.5px;top:59.8px;font-family:'Liberation Serif',serif;font-size:8.1px;font-style:italic;color:#3a3a3a">Option 2</div>
  <div class="a" style="left:11.5px;top:72px;width:39px;height:1.3px;background:#BDBDBD"></div>
  <div class="a" style="left:11.5px;top:77px;width:35px;height:1.3px;background:#BDBDBD"></div>
  <div class="a" style="left:77px;top:92.5px;width:21px;height:2px;background:#5BAE74"></div>
  <svg style="left:-121px;top:-431px" width="1400" height="788" viewBox="0 0 1400 788">
   <defs><radialGradient id="gG" cx=".45" cy=".4" r=".6"><stop offset="0" stop-color="#8DC052"/><stop offset=".45" stop-color="#3F9648"/><stop offset="1" stop-color="#1F6A42"/></radialGradient></defs>
   <path fill="url(#gG)" d="M198.8 476.4 L205.2 467.5 212 463 220.4 457.4 226 448 229.3 439.6 231 447 233.1 454.8 238 446 244.5 443.4 249 450 255.9 457.4 266.1 453.6 280 450 291.4 452.3 280 458 271.1 463.7 263.5 476.4 271.1 485.3 269 497 273.7 510.7 266 505 261 500.5 255 510 249.6 518.3 244 512 238.1 510.7 230 512 221.6 508.1 217 500 214 492.9 208 490 202.6 485.3Z"/>
   <g fill="#fff"><circle cx="247" cy="463" r="2.2"/><circle cx="212" cy="478" r="1.6"/><circle cx="218" cy="470" r="1.2"/><circle cx="224" cy="490" r="1.3"/><circle cx="258" cy="470" r="1"/><circle cx="254" cy="485" r="1.1"/><circle cx="235" cy="500" r="1.4"/><circle cx="228" cy="476" r="1"/><circle cx="265" cy="492" r="1.3"/></g>
   <path d="M240 470 L236 485" stroke="#fff" stroke-width="1.2"/>
   <g fill="#23704A"><circle cx="204" cy="456" r="2.2"/><circle cx="229" cy="440" r="1.8"/><circle cx="286" cy="470" r="1.5"/><circle cx="283" cy="490" r="1.6"/><path d="M221 508 L226 520 229 509Z"/><path d="M266 505 L280 514 270 498Z"/><path d="M233 455 L228 430 237 452Z"/></g>
   <circle cx="244" cy="443" r="1.5" fill="#8DBF5A"/>
  </svg>
</div>
<div class="num" style="top:549px">4</div>
<div class="thumb" style="top:548px">
  <div class="a" style="left:0;top:0;width:116px;height:101px;background:#F7F7F7"></div>
  <div class="t" style="left:12px;top:57.4px;font-family:'Liberation Serif',serif;font-size:10px;font-weight:bold;color:#2a2a2a">My slide title</div>
  <div class="a" style="left:12px;top:72.5px;width:20px;height:1.4px;background:#888"></div>
</div>
<div class="num" style="top:666px">5</div>
<div class="thumb" style="top:665px">
  <div class="a" style="left:8px;top:7px;width:1.2px;height:10.5px;background:#6AAE80"></div>
  <div class="t" style="left:11.5px;top:8.5px;font-family:'Liberation Serif',serif;font-size:5px;font-weight:bold;color:#333">About Us</div>
  <div class="a" style="left:8px;top:20.5px;width:75px;height:1px;background:#BDBDBD"></div>
  <div class="a" style="left:8px;top:24px;width:42px;height:1px;background:#BDBDBD"></div>
  <div class="a" style="left:8px;top:37px;width:58px;height:1.3px;background:#999"></div>
  <div class="a" style="left:8px;top:42.5px;width:55px;height:1.3px;background:#999"></div>
  <div class="a" style="left:11px;top:49px;width:64px;height:1px;background:#BDBDBD"></div>
  <div class="a" style="left:11px;top:53px;width:25px;height:1px;background:#BDBDBD"></div>
  <div class="a" style="left:11px;top:58px;width:66px;height:1px;background:#BDBDBD"></div>
  <div class="a" style="left:11px;top:62px;width:24px;height:1px;background:#BDBDBD"></div>
  <div class="a" style="left:11px;top:67px;width:42px;height:1px;background:#BDBDBD"></div>
  <div class="a" style="left:78px;top:93px;width:20px;height:2px;background:#7DBB8E"></div>
  <svg style="left:-121px;top:-665px" width="1400" height="788" viewBox="0 0 1400 788">
   <path fill="#DCD3C6" fill-opacity=".65" d="M219 676 L228 670 240 672 252 668.7 262 670 268.3 676 266 689 250 690 235 689.3 222 687Z"/>
   <path fill="#4F8F88" d="M232 700 C233 691 244 686 256 688 C265 691 268 700 266 712 C262 718 255 716 252 712 C248 716 240 716 236 712 C233 708 232 705 232 700Z"/>
   <path fill="#5E9D94" d="M248 705 C255 700 265 704 268 712 C272 720 274 728 270 732 C262 734 254 728 250 720 C247 714 246 708 248 705Z"/>
   <path fill="none" stroke="#BFD9C8" stroke-width="1" d="M238 703 C244 692 258 692 262 704 C264 712 258 718 252 714"/>
   <path fill="#2E6E6A" d="M252 706 C256 703 261 707 260 712 C258 716 253 715 252 711Z"/>
   <g fill="#7A8A80" fill-opacity=".8"><circle cx="231" cy="715" r="1.8"/><circle cx="240" cy="737" r="1.5"/><circle cx="249" cy="736" r="1.5"/><circle cx="233" cy="752" r="1"/><circle cx="245" cy="757" r=".9"/><circle cx="228" cy="730" r="1"/><circle cx="236" cy="725" r=".8"/><circle cx="252" cy="748" r=".8"/><circle cx="226" cy="744" r=".7"/><circle cx="256" cy="690" r="1.5"/></g>
  </svg>
</div>
<div class="num" style="top:783px">6</div>
<div class="thumb" style="top:782px"></div>

<!-- design cards -->
<div class="a" style="left:1035px;top:313.5px;width:258px;height:148.5px;background:#464646;border:1px solid #DADADA;overflow:hidden">
  <svg style="left:-1036px;top:-314.5px" width="1400" height="788" viewBox="0 0 1400 788">
    <defs><clipPath id="c1"><circle cx="1008" cy="330" r="155"/></clipPath></defs>
    <circle cx="1008" cy="330" r="157.5" fill="#F0E2D8"/>
    <g clip-path="url(#c1)"><use href="#leaves" x="1034" y="313" width="140" height="150"/></g>
  </svg>
  <div class="a" style="left:141.5px;top:38px;width:98px;height:62px;background:#1F1F1F"></div>
  <div class="t" style="left:143px;top:64.5px;font-family:'Liberation Serif',serif;font-size:14.5px;color:#fff">Section Divider</div>
  <div class="t" style="left:143px;top:82.5px;font-family:'Liberation Serif',serif;font-size:14.5px;font-style:italic;color:#fff;transform:scaleX(.88);transform-origin:0 0">Option 1</div>
  <div class="a" style="left:143px;top:101.5px;font-size:5.6px;line-height:6.1px;color:#e8e8e8;white-space:nowrap">Lorem ipsum dolor sit amet, consectetur<br>adipiscing elit.</div>
  <div class="a" style="left:233px;top:15px;width:9px;height:9px;border-radius:50%;background:#8c8c8c"></div>
  <div class="a" style="left:112px;top:136.5px;width:31px;height:1px;background:#3F9A64"></div>
  <div class="a" style="left:112px;top:140px;width:31px;height:1px;background:#6a6a6a"></div>
</div>
<div class="a" style="left:1034.5px;top:478px;width:258.5px;height:150px;background:#fff;border:1px solid #DADADA;overflow:hidden">
  <div class="a" style="left:7.5px;top:6.5px;width:93px;height:134px;background:#545454"></div>
  <div class="a" style="left:15.5px;top:19px;width:77px;height:62px;background:#9B9B9B"></div>
  <div class="t" style="left:18px;top:54.5px;font-family:'Liberation Serif',serif;font-size:11.4px;color:#fff;width:72px;text-align:center">Section Divider</div>
  <div class="t" style="left:18px;top:67.7px;font-family:'Liberation Serif',serif;font-size:11.4px;font-style:italic;color:#fff;width:72px;text-align:center">Option 1</div>
  <div class="a" style="left:28px;top:84.5px;width:54px;height:1px;background:#aaa"></div>
  <div class="a" style="left:4px;top:90px;width:101px;text-align:center;font-size:5.6px;line-height:6.1px;color:#eee;white-space:nowrap">Lorem ipsum dolor sit amet,<br>consectetur adipiscing elit</div>
  <svg style="left:112px;top:10px" width="131" height="126" viewBox="0 0 131 126" preserveAspectRatio="none"><use href="#leaves" x="0" y="0" width="131" height="126"/></svg>
  <div class="a" style="left:113px;top:139px;width:24px;height:2px;background:#3FA05C"></div>
</div>
<div class="a" style="left:1034.5px;top:642px;width:258px;height:160px;background:#fff;border:1px solid #DADADA;overflow:hidden">
  <svg style="left:99px;top:0" width="159" height="160" viewBox="0 0 159 160" preserveAspectRatio="none"><use href="#leaves" x="0" y="0" width="159" height="160"/></svg>
  <div class="t" style="left:17px;top:67.8px;font-family:'Liberation Serif',serif;font-size:10.3px;color:#222">Section Divider</div>
  <div class="t" style="left:17px;top:80.3px;font-family:'Liberation Serif',serif;font-size:10.3px;font-style:italic;color:#222;transform:scaleX(.88);transform-origin:0 0">Option 1</div>
  <div class="a" style="left:17px;top:97px;font-size:6.3px;line-height:6.4px;color:#333;white-space:nowrap">Lorem ipsum dolor sit<br>amet, consectetur<br>adipiscing elit</div>
</div>

<svg style="left:0;top:0" width="1400" height="788" viewBox="0 0 1400 788"><defs><linearGradient id="lg1" x1="0" y1="0" x2="1" y2="1"><stop offset="0" stop-color="#F9AE3E"/><stop offset="1" stop-color="#F38A36"/></linearGradient>
<linearGradient id="lg2" x1="0" y1="0" x2=".3" y2="1"><stop offset="0" stop-color="#F7A03C"/><stop offset="1" stop-color="#F0783A"/></linearGradient>
<linearGradient id="lg3" x1="0" y1="0" x2="1" y2="0"><stop offset="0" stop-color="#EE5F3A"/><stop offset="1" stop-color="#F27A3A"/></linearGradient>
<symbol id="leaves" viewBox="23 20 837 768" preserveAspectRatio="none">
<rect x="0" y="0" width="900" height="800" fill="#EB553C"/>
<path fill="#F0703A" d="M215 20 L300 20 C290 120 300 220 310 300 C250 320 180 330 150 300 C180 200 200 120 215 20Z"/>
<path fill="url(#lg1)" d="M45 20 L215 20 C190 150 120 280 60 370 C40 260 35 140 45 20Z"/>
<path fill="url(#lg3)" d="M23 420 C70 340 120 310 150 300 C175 450 175 620 150 788 L23 788Z"/>
<path fill="#F18A38" d="M300 20 L400 20 C380 120 370 220 380 300 C360 300 330 300 310 300 C300 200 295 100 300 20Z"/>
<path fill="#EA4E3C" d="M330 150 C350 200 370 260 380 300 C360 290 345 280 335 260Z"/>
<path fill="url(#lg1)" d="M160 788 C170 500 250 330 330 290 C390 420 440 600 460 788Z"/>
<path fill="url(#lg2)" d="M390 320 C420 150 500 60 560 20 L650 20 C620 150 560 250 520 300 C480 380 470 500 470 788 L430 788 C420 600 400 450 390 320Z"/>
<path fill="#F9A63D" d="M400 20 L560 20 C500 60 440 140 405 230 C395 150 395 80 400 20Z"/>
<path fill="url(#lg2)" d="M520 220 C600 300 700 500 740 788 L470 788 C470 600 480 400 520 220Z"/>
<path fill="url(#lg3)" d="M620 300 C680 200 760 130 820 80 L860 20 L860 788 L740 788 C720 600 680 420 620 300Z"/>
<path fill="#F7973B" d="M650 20 L810 20 C770 100 700 200 630 290 C620 200 630 100 650 20Z"/>
<path fill="#E9474A" d="M560 460 C600 520 640 650 690 788 L650 788 C620 680 590 560 560 460Z"/>
<path fill="#C8352E" d="M810 20 L860 20 L860 240 C840 160 825 80 810 20Z"/>
<path fill="#F39038" d="M760 320 C800 420 830 560 850 788 L770 788 C770 600 765 450 760 320Z"/>
<g fill="none" stroke="#FCC070" stroke-opacity=".55" stroke-width="3">
<path d="M60 370 C100 450 130 600 140 788"/><path d="M330 290 C300 400 280 600 300 788"/><path d="M520 300 C560 450 600 600 620 788"/><path d="M405 230 C380 350 370 500 360 788"/>
</g>
</symbol>
</defs><g fill="none" stroke-linecap="round" stroke-linejoin="round">
<!-- chevrons -->
<g stroke="#333" stroke-width="1.5">
<path d="M138.5 131.5 L141.2 134.5 143.9 131.5"/>
<path d="M205.5 131.5 L208.2 134.5 210.9 131.5"/>
<path d="M272.5 132 L275.2 135 277.9 132"/>
<path d="M328.5 132 L331.2 135 333.9 132"/>
<path d="M451.3 162.3 L453.8 165.2 456.3 162.3"/>
<path d="M518.2 132 L521 135 523.8 132"/>
<path d="M605 132 L607.8 135 610.6 132"/>
<path d="M654.2 132 L657 135 659.8 132"/>
<path d="M977.5 132.3 L980.1 135.3 982.7 132.3"/>
<path d="M1067.6 132.3 L1070.2 135.3 1072.8 132.3"/>
<path d="M1179.2 132.3 L1181.8 135.3 1184.4 132.3"/>
<path d="M1227.9 132.3 L1230.5 135.3 1233.1 132.3"/>
</g>
<!-- New slide -->
<rect x="105.8" y="123" width="25.2" height="20.8" stroke="#666" stroke-width="1.3" fill="#FAFAFA"/>
<path d="M103.6 126 V146 H128" stroke="#777" stroke-width="1.2"/>
<path d="M102 125 H116 M108.5 118 V132" stroke="#3DAA5C" stroke-width="1.4"/>
<!-- Table -->
<rect x="180" y="129" width="18" height="14" fill="#6DB0E6" stroke="none"/>
<path d="M171.5 122.5 H197.5 V143.5 H171.5 Z M180.5 122.5 V143.5 M189 122.5 V143.5 M171.5 129.5 H197.5 M171.5 136.5 H197.5" stroke="#555" stroke-width="1.2"/>
<path d="M198 128 L186 141" stroke="#555" stroke-width="3.6"/>
<path d="M198 128 L186 141" stroke="#fff" stroke-width="1.8"/>
<path d="M186 140 C183 141 181 144 178 147 C183 148 187 146 188 142Z" fill="#5AA7E0" stroke="#3C7DBA" stroke-width=".8"/>
<!-- Pictures -->
<rect x="238.5" y="123" width="26.5" height="20" fill="#fff" stroke="#555" stroke-width="1.3"/>
<path d="M239 136 L246.1 128.5 256 137.5 M255 136 L257.5 133.3 264.6 140" stroke="#2F6EA8" stroke-width="1.1" fill="none"/>
<path d="M239 136 L246.1 128.5 256 137.5 257.5 133.3 264.6 140 L264.6 142.6 H239Z" fill="#75B3E5" stroke="none"/>
<path d="M239 136 L246.1 128.5 256 137.5 M255 136.2 L257.5 133.3 264.6 140" stroke="#2F6EA8" stroke-width="1.1"/>
<circle cx="259.5" cy="128.5" r="1.5" fill="#F0A35A" stroke="none"/>
<!-- Screenshot -->
<path d="M294.3 121 H317.5 V137 M294.3 121 V136" stroke="#555" stroke-width="1.2" stroke-dasharray="3 2.5"/>
<path d="M292.5 138.5 H296 L297.5 136 H304 L305.5 138.5 H309 V149 H292.5Z" fill="#BDBDBD" stroke="#555" stroke-width="1.2"/>
<circle cx="300.7" cy="143.5" r="2.8" fill="#fff" stroke="#555" stroke-width="1"/>
<path d="M312 144 H323.2 M317.6 138.5 V149.5" stroke="#3DAA5C" stroke-width="1.4"/>
<!-- Get Add-ins -->
<path d="M368.3 127.5 H374.8 V139.2 H368.3Z M368.3 133.4 H382 M374.8 133.4 H382 V139.2 H374.8" stroke="#D9604F" stroke-width="1.2"/>
<path d="M380 122.5 V131 M375.8 126.8 H384" stroke="#D9604F" stroke-width="1.2"/>
<!-- My Add-ins -->
<path d="M377.7 157.2 L382.5 160 382.5 165.5 377.7 168.3 372.9 165.5 372.9 160Z" fill="#F4F8FB" stroke="#8FA8BF" stroke-width="1.1"/>
<path d="M371.4 163 L374.5 164.8 374.5 168.4 371.4 170.2 368.3 168.4 368.3 164.8Z" fill="#DDF0F8" stroke="#8FA8BF" stroke-width="1.1"/>
<!-- Shapes -->
<rect x="484.5" y="120.5" width="17.5" height="17.5" fill="#74B1E3" stroke="#3C7DBA" stroke-width="1"/>
<circle cx="501.2" cy="137.6" r="9.3" fill="#F8F8F8" stroke="#555" stroke-width="1.3"/>
<!-- Icons (duck + leaf) -->
<path d="M533.5 128 C534 136 538 141 545 141.5 L552 136 C556 133 557 130 554 128 L558.5 125.5 C556 124.5 555 124 554.5 123 C553 119 546 119 544.5 124 C543.5 127 545 129 546 130.5 C541 131.5 537 130.5 533.5 128Z" fill="#6DAFE5" stroke="#3C7DBA" stroke-width="1"/>
<path d="M557.5 131.5 C550 131.5 543 135 543 141 C543 145 546 147.5 550 147.5 C555 147.5 558 142 557.5 131.5Z" fill="#F6F6F6" stroke="#555" stroke-width="1.2"/>
<path d="M540.5 149 L551 139" stroke="#555" stroke-width="1.2"/>
<!-- SmartArt -->
<path d="M570.5 123.4 H588.2 L596 132 L588 140.5 H570.5 L578 132Z" fill="#A2D9B3" stroke="#4FA06A" stroke-width="1"/>
<rect x="580.5" y="132.5" width="17" height="11.5" rx="1.2" fill="#fff" stroke="#555" stroke-width="1.3"/>
<path d="M583.5 136.5 H594.5 M583.5 139.5 H594.5" stroke="#888" stroke-width=".8" stroke-dasharray="1 .6"/>
<!-- Chart -->
<rect x="621.5" y="130.5" width="8" height="16.5" fill="#C8C8C8" stroke="#888" stroke-width="1"/>
<rect x="629.5" y="120.3" width="8" height="26.7" fill="#fff" stroke="#444" stroke-width="1.2"/>
<rect x="637.5" y="125" width="8" height="22" fill="#7DB8E8" stroke="#3A7DBB" stroke-width="1"/>
<!-- Link -->
<path d="M699 126 H694 C689 126 687.5 128.5 687.5 130.5 C687.5 133 689.5 135.5 694 135.5 H700 C703 135.5 705 134 705 132.5" stroke="#555" stroke-width="1.3"/>
<path d="M702.5 141.5 H708 C712.5 141.5 714.5 139 714.5 136.5 C714.5 134 712.5 131.5 708 131.5 H701 C698 131.5 696 133 696 134.5 C696 136 697 141.5 702.5 141.5Z" stroke="#555" stroke-width="1.3"/>
<path d="M694 126 H700 C704 126 707 128.5 707 131" stroke="#555" stroke-width="1.3"/>
<!-- Action -->
<rect x="725.8" y="121.3" width="25" height="24.8" stroke="#555" stroke-width="1.2"/>
<g fill="#F0A060" stroke="none"><rect x="724.3" y="119.8" width="3" height="3"/><rect x="749.3" y="119.8" width="3" height="3"/><rect x="724.3" y="144.6" width="3" height="3"/><rect x="749.3" y="144.6" width="3" height="3"/></g>
<path d="M737.9 125 L740.4 131 746.8 131.4 741.9 135.4 743.5 141.6 737.9 138.2 732.3 141.6 733.9 135.4 729 131.4 735.4 131Z" fill="#F8C57A" stroke="#E59B4C" stroke-width="1"/>
<!-- Comment -->
<path d="M797 121.8 H816 V139 H798 L792 145.5 V139 H789.3 V128" stroke="#555" stroke-width="1.3" fill="#FAFAFA"/>
<path d="M787 125.2 H801 M794.1 118.5 V132" stroke="#3DAA5C" stroke-width="1.4"/>
<!-- Text box -->
<rect x="852.3" y="122.3" width="29" height="23" stroke="#777" stroke-width="1.2" fill="#fff"/>
<g fill="#3A7DBB" stroke="none"><circle cx="852.3" cy="122.3" r="1.6"/><circle cx="881.3" cy="122.3" r="1.6"/><circle cx="852.3" cy="145.3" r="1.6"/><circle cx="881.3" cy="145.3" r="1.6"/></g>
<path d="M861.5 140 L866.9 127 872.3 140 M863.3 135.5 H870.5" stroke="#3E8CC8" stroke-width="1.2"/>
<!-- Header footer -->
<path d="M901.3 120.3 H913.5 L921.3 128 V147.3 H901.3Z M913.5 120.3 V128 H921.3" stroke="#555" stroke-width="1.2" fill="#fff"/>
<rect x="905" y="125" width="7.3" height="3.3" fill="#F3B86A" stroke="none"/>
<rect x="905" y="139" width="12.8" height="3.4" fill="#F3B86A" stroke="none"/>
<!-- WordArt -->
<path d="M946.3 137 C952 133 960 126 966.3 121.5 L962.2 146.2 M946.3 137 L963.5 139" stroke="#3E8CC8" stroke-width="2"/>
<!-- small column -->
<path d="M990.8 121.5 H1005.8 V125 H990.8Z M990.8 125 V133.3 H998 M993.5 119.5 V122 M1003 119.5 V122" stroke="#555" stroke-width="1.1"/>
<circle cx="1002.3" cy="129.4" r="4" fill="#fff" stroke="#3A8CC8" stroke-width="1.1"/>
<path d="M1002.3 127.5 V129.4 L1003.8 130.6" stroke="#3A8CC8" stroke-width=".9"/>
<rect x="990.8" y="140.3" width="15" height="13" stroke="#555" stroke-width="1.1"/>
<rect x="992.8" y="142.3" width="11" height="9" stroke="#888" stroke-width=".7" fill="#fff"/>
<rect x="996.5" y="145" width="3.2" height="3.2" fill="#5BA4DA" stroke="none"/>
<rect x="993.3" y="162.3" width="10.2" height="14.2" stroke="#555" stroke-width="1.1" fill="#fff"/>
<rect x="990.8" y="165.2" width="8" height="7.3" stroke="#3A8CC8" stroke-width="1.1" fill="#DCEBF6"/>
<!-- Equation -->
<path d="M1035.5 123.5 H1058.8 M1040.6 124 C1040.8 130 1040.5 137 1039.8 143.8 M1052.4 124 C1052.2 131 1052.4 137 1053 141 C1053.5 143.5 1055.5 144.2 1058.8 143.8" stroke="#333" stroke-width="1.5"/>
<!-- Symbol -->
<path d="M1088 144.4 H1095.5 C1091 141 1088.5 137 1088.5 132.5 C1088.5 126.5 1093 122.8 1099.2 122.8 C1105.4 122.8 1110 126.5 1110 132.5 C1110 137 1107.5 141 1103 144.4 H1110.6" stroke="#B5B5B5" stroke-width="1.3"/>
<!-- Video -->
<rect x="1144.5" y="124.3" width="27.3" height="18.8" stroke="#444" stroke-width="1.3" fill="#fafafa"/>
<path d="M1148.4 126.5 V141 M1168 126.5 V141" stroke="#333" stroke-width="1.3" stroke-dasharray="1.3 2"/>
<!-- Audio -->
<path d="M1194 129.5 H1198.5 L1207.8 124 V143.2 L1198.5 137.8 H1194Z" stroke="#444" stroke-width="1.2" fill="#fafafa"/>
<path d="M1210.3 130.5 C1211.5 132.5 1211.5 135 1210.3 137 M1213.3 127.5 C1215.5 131 1215.5 136.5 1213.3 140 M1216.5 122 C1220.5 129 1220.5 138.5 1216.5 145.5" stroke="#444" stroke-width="1.2"/>
</g>
<g fill="none" stroke-linecap="round" stroke-linejoin="round">
<!-- title bar icons -->
<g stroke="#FBE3DC" stroke-width="1.8">
<rect x="282.5" y="57.8" width="15" height="13.6"/>
<path d="M285.6 58 V71.2 M287.8 58 V71.2"/>
<path d="M290 61 H294 L296.5 63.5 V68.5"/>
<path d="M307 57 H319.5 V64 M307 57 V70.8 H312"/>
<path d="M309.5 57.5 V61 H317 V57.5"/>
<path d="M314 66 C315 63.5 319 63 321 65.5 M321 69.5 C319.5 72 315.5 72.5 314 70" stroke-width="1.4"/>
<path d="M332.5 63 H341.5 C345 63 347 65.5 347 67.5 C347 70 345 71.5 341.5 71.5 M336 59.5 L332.5 63 336 66.5"/>
<path d="M353.8 63.5 L356.3 66.3 358.8 63.5" stroke-width="1.1"/>
<path d="M371.5 60.8 A7 7 0 1 0 381 61.5 M376 58.5 H381.3 V63.5"/>
</g>
<path d="M397 62 H403.5" stroke="#FBE3DC" stroke-width="1.3"/>
<path d="M397 65 H403.5 L400.2 69.5Z" fill="#FBE3DC" stroke="#FBE3DC" stroke-width="1"/>
<!-- doc icon -->
<path d="M552.5 58 H558.5 L561.5 61 V71.5 H552.5Z" fill="#FBE8E2" stroke="none"/>
<path d="M549.5 61.5 H556 V68.5 H549.5Z" fill="#C9513A" stroke="#FBE8E2" stroke-width="1"/>
<path d="M551.5 66.5 V63.3 H553.5 C554.5 63.3 554.8 65 553.5 65 H551.5" stroke="#FBE8E2" stroke-width=".9"/>
<!-- search -->
<circle cx="1061.5" cy="63.5" r="3.6" stroke="#F0B7A9" stroke-width="1.4"/>
<path d="M1064.2 66.2 L1067 69" stroke="#F0B7A9" stroke-width="1.6"/>
<path d="M1069.5 64.3 L1071.4 66 1073.3 64.3" fill="#F0B7A9" stroke="#F0B7A9" stroke-width="1"/>
<!-- smiley -->
<circle cx="1279.7" cy="65.3" r="7.3" stroke="#FBE3DC" stroke-width="1.4"/>
<circle cx="1277.2" cy="63" r=".9" fill="#FBE3DC" stroke="none"/>
<circle cx="1282.2" cy="63" r=".9" fill="#FBE3DC" stroke="none"/>
<path d="M1276.2 66.5 C1277.5 69.5 1281.9 69.5 1283.2 66.5" stroke="#FBE3DC" stroke-width="1.3"/>
<path d="M1293.6 63.5 L1296.5 66.5 1299.4 63.5" stroke="#FBE3DC" stroke-width="1.4"/>
<!-- share icon -->
<path d="M1058.5 97 V103 H1069 V100" stroke="#A85A52" stroke-width="1.3"/>
<path d="M1061 100.5 C1061.5 96 1064 94.5 1068 94.5 M1065.5 92 L1068.5 94.5 1065.5 97" stroke="#A85A52" stroke-width="1.3"/>
<!-- comments icon -->
<path d="M1132.5 90.5 H1144.3 V99 H1137.5 L1134.5 102 V99 H1132.5Z" stroke="#A85A52" stroke-width="1.3"/>
<!-- history icon -->
<path d="M1236.5 93 C1238 91.2 1240 90.3 1241.5 90.3 C1244.8 90.3 1247.3 92.9 1247.3 96.2 C1247.3 99.5 1244.8 102 1241.5 102 C1238.2 102 1235.7 99.5 1235.7 96.2 M1235.5 90.5 V93.5 H1238.5 M1241.5 93 V96.5 L1243.8 98.2" stroke="#A85A52" stroke-width="1.3"/>
<!-- close X -->
<path d="M1292.9 195.4 L1298.5 201 M1298.5 195.4 L1292.9 201" stroke="#fff" stroke-width="1.6"/>
<!-- animate icon -->
<rect x="1046" y="225.5" width="17" height="11.5" rx="2" fill="#EAF4EA" stroke="#C9D9C9" stroke-width=".8"/>
<path d="M1047 236 C1050 232 1054 231 1058 234 L1062 236.5" stroke="#8FC79A" stroke-width="1.5"/>
<path d="M1048 223 L1053 232" stroke="#4A7DB0" stroke-width="1.6"/>
<circle cx="1059" cy="229" r="1.8" fill="#F4C04E" stroke="none"/>
</g>
</svg>
</body></html>
